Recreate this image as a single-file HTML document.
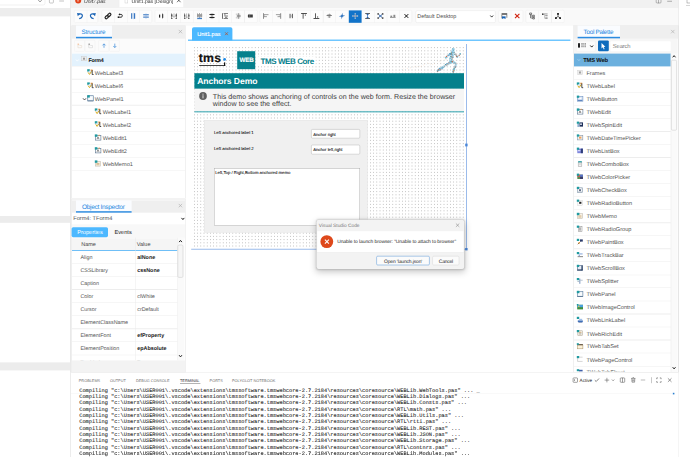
<!DOCTYPE html>
<html><head><meta charset="utf-8"><title>TMS WEB Core - Visual Studio Code</title>
<style>
html,body{margin:0;padding:0;}
body{width:690px;height:457px;overflow:hidden;background:#fff;position:relative;font-family:"Liberation Sans",sans-serif;color:#222;text-rendering:geometricPrecision;}
div{position:absolute;box-sizing:border-box;}
.t{white-space:nowrap;line-height:1;}
text{white-space:pre;}
svg{position:absolute;overflow:visible;}
.mono{font-family:"Liberation Mono",monospace;font-size:5.3px;color:#3a3a3a;white-space:pre;line-height:6.4px;}
</style></head><body>
<div style="left:0;top:0;width:1725px;height:1142.5px;transform:scale(0.4);transform-origin:0 0;"><div id="ide" style="left:0;top:0;width:690px;height:457px;zoom:2.5;">

<div style="left:0px;top:8.1px;width:70px;height:8.1px;background:#ededed;"></div>
<div style="left:0px;top:215.8px;width:70px;height:6.8px;background:#ececec;"></div>
<div style="left:0px;top:362.4px;width:70px;height:7.8px;background:#ececec;"></div>
<div style="left:-5px;top:-6px;width:50px;height:11px;border:0.6px solid #d8d8d8;border-radius:2px;"></div>
<svg style="left:38px;top:0px;" width="4" height="3" viewBox="0 0 4 3"><path d="M0.4 0.2 L2 1.8 L3.6 0.2" fill="none" stroke="#555" stroke-width="0.7"/></svg>
<div style="left:49px;top:-2px;width:4.5px;height:5px;border:0.7px solid #777;border-radius:1px;"></div>
<div style="left:59px;top:-0.3px;width:5px;height:0.7px;background:#b5b5b5;"></div>
<div style="left:59px;top:1px;width:5px;height:0.7px;background:#b5b5b5;"></div>
<div style="left:70px;top:0px;width:0.7px;height:457px;background:#e3e3e3;"></div>
<div style="left:70.7px;top:0px;width:607.5px;height:8.4px;background:#f1f1f1;"></div>
<div style="left:118.7px;top:0px;width:65.4px;height:7.2px;background:#fff;border-left:0.5px solid #e2e2e2;border-right:0.5px solid #e2e2e2;"></div>
<div style="left:70.7px;top:8.4px;width:607.5px;height:1px;background:#fbfbfb;"></div>
<div style="left:75px;top:-2.4px;width:6px;height:6px;border-radius:50%;background:#e2421a;"></div>
<div style="left:77.5px;top:-1px;width:1px;height:2.6px;background:#fff;"></div>
<svg class="t" style="left:83.9px;top:3.10px;" width="1" height="1"><text x="0" y="0" font-size="5.1" fill="#333" style="font-style:italic;">Unit7.pas</text></svg>
<div style="left:124.8px;top:-2px;width:3px;height:5.2px;border:0.5px solid #c4c4c4;"></div>
<svg class="t" style="left:131.7px;top:3.10px;" width="1" height="1"><text x="0" y="0" font-size="5.1" fill="#333" style="">Unit1.pas [Design]</text></svg>
<svg style="left:176.8px;top:-1px;" width="4" height="4" viewBox="0 0 4 4"><path d="M0.3 -1 L3.7 3 M3.7 -1 L0.3 3" stroke="#333" stroke-width="0.7"/></svg>
<div style="left:656px;top:-2px;width:5px;height:5px;border:0.6px solid #555;border-radius:1px;"></div>
<div style="left:658.2px;top:-2px;width:0.6px;height:5px;background:#555;"></div>
<div style="left:667px;top:0.6px;width:5px;height:0.8px;background:#999;"></div>
<div style="left:70.7px;top:9px;width:607.5px;height:16.4px;background:#f9f9f9;"></div>
<div style="left:73.8px;top:10.1px;width:24.3px;height:12.7px;background:#fcfcfc;border:0.5px solid #ececec;border-radius:1.5px;"></div>
<div style="left:101.6px;top:10.1px;width:50.3px;height:12.7px;background:#fcfcfc;border:0.5px solid #ececec;border-radius:1.5px;"></div>
<div style="left:154.8px;top:10.1px;width:102.6px;height:12.7px;background:#fcfcfc;border:0.5px solid #ececec;border-radius:1.5px;"></div>
<div style="left:259.6px;top:10.1px;width:152.3px;height:12.7px;background:#fcfcfc;border:0.5px solid #ececec;border-radius:1.5px;"></div>
<div style="left:498.5px;top:10.1px;width:24.7px;height:12.7px;background:#fcfcfc;border:0.5px solid #ececec;border-radius:1.5px;"></div>
<div style="left:525.6px;top:10.1px;width:38.9px;height:12.7px;background:#fcfcfc;border:0.5px solid #ececec;border-radius:1.5px;"></div>
<div style="left:86.6px;top:10.4px;width:0.5px;height:12.4px;background:#ededed;"></div>
<div style="left:114.3px;top:10.4px;width:0.5px;height:12.4px;background:#ededed;"></div>
<div style="left:127px;top:10.4px;width:0.5px;height:12.4px;background:#ededed;"></div>
<div style="left:139.6px;top:10.4px;width:0.5px;height:12.4px;background:#ededed;"></div>
<div style="left:167.6px;top:10.4px;width:0.5px;height:12.4px;background:#ededed;"></div>
<div style="left:180.3px;top:10.4px;width:0.5px;height:12.4px;background:#ededed;"></div>
<div style="left:193px;top:10.4px;width:0.5px;height:12.4px;background:#ededed;"></div>
<div style="left:205.8px;top:10.4px;width:0.5px;height:12.4px;background:#ededed;"></div>
<div style="left:218.6px;top:10.4px;width:0.5px;height:12.4px;background:#ededed;"></div>
<div style="left:231.4px;top:10.4px;width:0.5px;height:12.4px;background:#ededed;"></div>
<div style="left:244.1px;top:10.4px;width:0.5px;height:12.4px;background:#ededed;"></div>
<div style="left:272.2px;top:10.4px;width:0.5px;height:12.4px;background:#ededed;"></div>
<div style="left:284.8px;top:10.4px;width:0.5px;height:12.4px;background:#ededed;"></div>
<div style="left:297.5px;top:10.4px;width:0.5px;height:12.4px;background:#ededed;"></div>
<div style="left:310.2px;top:10.4px;width:0.5px;height:12.4px;background:#ededed;"></div>
<div style="left:322.9px;top:10.4px;width:0.5px;height:12.4px;background:#ededed;"></div>
<div style="left:335.6px;top:10.4px;width:0.5px;height:12.4px;background:#ededed;"></div>
<div style="left:374px;top:10.4px;width:0.5px;height:12.4px;background:#ededed;"></div>
<div style="left:386.7px;top:10.4px;width:0.5px;height:12.4px;background:#ededed;"></div>
<div style="left:399.6px;top:10.4px;width:0.5px;height:12.4px;background:#ededed;"></div>
<div style="left:510.8px;top:10.4px;width:0.5px;height:12.4px;background:#ededed;"></div>
<div style="left:538.4px;top:10.4px;width:0.5px;height:12.4px;background:#ededed;"></div>
<div style="left:551.3px;top:10.4px;width:0.5px;height:12.4px;background:#ededed;"></div>
<svg style="left:76px;top:12.0px;" width="8" height="8" viewBox="-4 -4 8 8"><path d="M-1.2 -1.7 C1.2 -2.8 2.9 -1.4 2.2 0.4 C1.7 1.6 0.5 2.3 -0.8 2.6" stroke="#1862b5" stroke-width="1.25" fill="none" stroke-linecap="butt"/><path d="M-3 -3 L0.2 -2.4 L-2.2 0.3 Z" fill="#1862b5"/></svg>
<svg style="left:88.7px;top:12.0px;" width="8" height="8" viewBox="-4 -4 8 8"><path d="M1.2 -1.7 C-1.2 -2.8 -2.9 -1.4 -2.2 0.4 C-1.7 1.6 -0.5 2.3 0.8 2.6" stroke="#1862b5" stroke-width="1.25" fill="none" stroke-linecap="butt"/><path d="M3 -3 L-0.2 -2.4 L2.2 0.3 Z" fill="#1862b5"/></svg>
<svg style="left:104px;top:12.0px;" width="8" height="8" viewBox="-4 -4 8 8"><g transform="rotate(-42)"><rect x="-3.5" y="-1.15" width="3.7" height="2.3" rx="1.15" fill="none" stroke="#222" stroke-width="1.15"/><rect x="-0.2" y="-1.15" width="3.7" height="2.3" rx="1.15" fill="none" stroke="#222" stroke-width="1.15"/></g></svg>
<svg style="left:116.5px;top:12.0px;" width="8" height="8" viewBox="-4 -4 8 8"><path d="M-1.2 1.2 L0.8 1.2 C2.2 1.2 2.4 -1.6 0.8 -1.6 L-0.8 -1.6" stroke="#333" stroke-width="1.0" fill="none" stroke-linecap="butt"/><rect x="-2.7" y="0.4" width="1.6" height="1.6" fill="#222"/><path d="M-0.4 -2.8 L-2 -1.6 L-0.4 -0.5 Z" fill="#222"/></svg>
<svg style="left:129.2px;top:12.0px;" width="8" height="8" viewBox="-4 -4 8 8"><rect x="-2" y="-2.8" width="1.05" height="5.6" fill="#2468bb"/><rect x="0.9" y="-2.8" width="1.05" height="5.6" fill="#2468bb"/><rect x="-0.25" y="-3.2" width="0.5" height="6.4" fill="#7fa9dc"/></svg>
<svg style="left:141.8px;top:12.0px;" width="8" height="8" viewBox="-4 -4 8 8"><rect x="-2.8" y="-1.7" width="5.6" height="1.0" fill="#2468bb"/><rect x="-2.8" y="0.6" width="5.6" height="1.0" fill="#2468bb"/><rect x="-0.25" y="-2.6" width="0.5" height="5.4" fill="#7fa9dc"/></svg>
<svg style="left:157.2px;top:12.0px;" width="8" height="8" viewBox="-4 -4 8 8"><rect x="-2.2" y="-1.4" width="1.2" height="3" fill="#222"/><rect x="0.8" y="-1.9" width="1.2" height="3.8" fill="#222"/><rect x="1.2" y="-3" width="0.4" height="6" fill="#777"/></svg>
<svg style="left:169.9px;top:12.0px;" width="8" height="8" viewBox="-4 -4 8 8"><rect x="-2.5" y="-2.6" width="0.5" height="5" fill="#333"/><rect x="-0.25" y="-2.6" width="0.5" height="4.2" fill="#777"/><rect x="2" y="-2.6" width="0.5" height="5" fill="#333"/><rect x="-3" y="-1.6" width="1.5" height="2" fill="#555"/><rect x="1.5" y="-1.6" width="1.5" height="2" fill="#555"/><rect x="-2.4" y="0.6" width="4.8" height="0.5" fill="#999"/><rect x="-2.9" y="2.2" width="1.4" height="0.7" fill="#222"/><rect x="1.5" y="2.2" width="1.4" height="0.7" fill="#222"/></svg>
<svg style="left:182.6px;top:12.0px;" width="8" height="8" viewBox="-4 -4 8 8"><rect x="-2.3" y="-2.6" width="0.5" height="5" fill="#333"/><rect x="-0.25" y="-2.6" width="0.5" height="5" fill="#777"/><rect x="1.8" y="-2.6" width="0.5" height="5" fill="#333"/><rect x="-2.7" y="-1.4" width="1.2" height="2" fill="#555"/><rect x="1.5" y="-1.4" width="1.2" height="2" fill="#555"/><rect x="-2.4" y="0.8" width="4.8" height="0.5" fill="#999"/><rect x="-2.7" y="2.2" width="1.4" height="0.7" fill="#222"/><rect x="1.3" y="2.2" width="1.4" height="0.7" fill="#222"/></svg>
<svg style="left:195.5px;top:12.0px;" width="8" height="8" viewBox="-4 -4 8 8"><rect x="-2.2" y="-2.8" width="0.5" height="4.4" fill="#777"/><rect x="-0.25" y="-3" width="0.5" height="4.8" fill="#555"/><rect x="1.7" y="-2.8" width="0.5" height="4.4" fill="#777"/><rect x="-2.6" y="-1.8" width="5.2" height="2.6" fill="#9a9a9a"/><rect x="-2.4" y="2.2" width="4.8" height="0.9" fill="#1862b5"/><rect x="-1.2" y="1.5" width="2.4" height="0.7" fill="#5b8fd0"/></svg>
<svg style="left:208.1px;top:12.0px;" width="8" height="8" viewBox="-4 -4 8 8"><ellipse cx="0" cy="-1.5" rx="2.9" ry="0.7" fill="#222"/><ellipse cx="0" cy="1.5" rx="2.9" ry="0.7" fill="#222"/><rect x="-0.6" y="-0.5" width="1.2" height="1" fill="#777"/></svg>
<svg style="left:221px;top:12.0px;" width="8" height="8" viewBox="-4 -4 8 8"><rect x="-2.9" y="-2.8" width="0.7" height="5.6" fill="#333"/><rect x="-1.6" y="-2.6" width="4.4" height="0.6" fill="#333"/><rect x="-0.8" y="-0.3" width="3.6" height="0.6" fill="#333"/><rect x="-1.6" y="2" width="4.4" height="0.6" fill="#333"/><rect x="-1.2" y="-1.6" width="1.6" height="1.0" fill="#777"/><rect x="-0.2" y="0.8" width="2.2" height="1.0" fill="#777"/></svg>
<svg style="left:233.8px;top:12.0px;" width="8" height="8" viewBox="-4 -4 8 8"><rect x="0.3" y="-2.8" width="0.5" height="5.6" fill="#555"/><rect x="-2.2" y="-2.2" width="4.4" height="0.6" fill="#999"/><rect x="-1.2" y="-0.8" width="3.8" height="1.6" fill="#8a8a8a"/><rect x="-2.2" y="1.6" width="4.4" height="0.6" fill="#999"/></svg>
<svg style="left:246.4px;top:12.0px;" width="8" height="8" viewBox="-4 -4 8 8"><rect x="-2.4" y="-1.5" width="4.8" height="3" fill="#3a3a3a"/><rect x="-0.8" y="-2.2" width="0.5" height="4.4" fill="#999"/><rect x="-2.9" y="-0.3" width="0.6" height="0.6" fill="#777"/></svg>
<svg style="left:261.8px;top:12.0px;" width="8" height="8" viewBox="-4 -4 8 8"><rect x="-2.7" y="-2.8" width="0.6" height="5.6" fill="#444"/><rect x="-2.1" y="-1.6" width="4.6" height="0.7" fill="#777"/><rect x="-2.1" y="0.4" width="3" height="0.7" fill="#777"/><rect x="-1.7" y="-1.6" width="0.4" height="2.6" fill="#999"/></svg>
<svg style="left:274.4px;top:12.0px;" width="8" height="8" viewBox="-4 -4 8 8"><rect x="2.1" y="-2.8" width="0.6" height="5.6" fill="#444"/><rect x="-2.5" y="-1.6" width="4.6" height="0.7" fill="#777"/><rect x="-0.9" y="0.4" width="3" height="0.7" fill="#777"/><rect x="1.3" y="-1.6" width="0.4" height="2.6" fill="#999"/></svg>
<svg style="left:287.2px;top:12.0px;" width="8" height="8" viewBox="-4 -4 8 8"><rect x="-1.6" y="-2.2" width="0.9" height="4.4" fill="#444"/><rect x="0.7" y="-2.2" width="0.9" height="4.4" fill="#444"/><rect x="-0.3" y="-0.4" width="0.6" height="0.8" fill="#555"/></svg>
<svg style="left:299.8px;top:12.0px;" width="8" height="8" viewBox="-4 -4 8 8"><rect x="-2.9" y="-2.9" width="5.8" height="0.8" fill="#222"/><rect x="-1.3" y="-2.1" width="0.8" height="4.8" fill="#333"/><rect x="0.9" y="-1.8" width="0.8" height="1.8" fill="#777"/></svg>
<svg style="left:312.5px;top:12.0px;" width="8" height="8" viewBox="-4 -4 8 8"><rect x="-2.9" y="2.1" width="5.8" height="0.8" fill="#222"/><rect x="-1.3" y="-2.7" width="0.8" height="4.8" fill="#333"/><rect x="0.9" y="0" width="0.8" height="2" fill="#777"/></svg>
<svg style="left:325.2px;top:12.0px;" width="8" height="8" viewBox="-4 -4 8 8"><rect x="-2.6" y="-0.9" width="5.2" height="0.7" fill="#444"/><rect x="-1.8" y="-2" width="3.6" height="0.6" fill="#999"/><rect x="-1.4" y="0.6" width="2.8" height="0.7" fill="#777"/><rect x="-0.25" y="-2.4" width="0.5" height="4.4" fill="#777"/></svg>
<svg style="left:338.1px;top:12.0px;" width="8" height="8" viewBox="-4 -4 8 8"><path d="M0.6 -3.2 L0.5 -0.7 L3.2 -0.3 L0.7 0.5 L-0.6 3.2 L-0.5 0.7 L-3.2 0.2 L-0.7 -0.5 Z" fill="#1862b5"/></svg>
<div style="left:348.8px;top:10.2px;width:12.7px;height:12.6px;background:#1173c9;"></div>
<svg style="left:351.2px;top:12.0px;" width="8" height="8" viewBox="-4 -4 8 8"><path d="M-2.8 0 L2.8 0 M0 -2.6 L0 2.6" stroke="#9fb2c8" stroke-width="0.9" fill="none" stroke-linecap="butt"/><circle cx="0" cy="0" r="1.3" fill="#8ea3bc"/><path d="M-3.3 0 L-2 -0.9 L-2 0.9 Z M3.3 0 L2 -0.9 L2 0.9 Z M0 -3.1 L-0.9 -1.9 L0.9 -1.9 Z M0 3.1 L-0.9 1.9 L0.9 1.9 Z" fill="#b4c2d2"/></svg>
<svg style="left:363.6px;top:12.0px;" width="8" height="8" viewBox="-4 -4 8 8"><rect x="-2.4" y="-3" width="4.8" height="0.7" fill="#222"/><rect x="-2.4" y="2.3" width="4.8" height="0.7" fill="#222"/><rect x="-0.35" y="-2.2" width="0.7" height="4.4" fill="#2a5fa8"/><path d="M0 -2.6 L-1.4 -1 L1.4 -1 Z M0 2.6 L-1.4 1 L1.4 1 Z" fill="#2a5fa8"/></svg>
<svg style="left:376.4px;top:12.0px;" width="8" height="8" viewBox="-4 -4 8 8"><path d="M-1.6 -1.4 L1.6 1.4 M1.6 -1.4 L-1.6 1.4" stroke="#2a5fa8" stroke-width="1.0" fill="none" stroke-linecap="butt"/><rect x="-3" y="-2.7" width="1.5" height="1.3" fill="#222"/><rect x="1.5" y="-2.7" width="1.5" height="1.3" fill="#222"/><rect x="-3" y="1.4" width="1.5" height="1.3" fill="#222"/><rect x="1.5" y="1.4" width="1.5" height="1.3" fill="#222"/></svg>
<svg style="left:388.9px;top:12.0px;" width="8" height="8" viewBox="-4 -4 8 8"><rect x="-2.8" y="1.2" width="5.6" height="0.7" fill="#777"/><rect x="-2.4" y="-0.4" width="1.8" height="1.4" fill="#8a8a8a"/><rect x="0.6" y="-1.2" width="1.9" height="2.2" fill="#8a8a8a"/></svg>
<svg style="left:402.5px;top:12.0px;" width="8" height="8" viewBox="-4 -4 8 8"><path d="M-2 -2 L2 2 M2 -2 L-2 2" stroke="#333" stroke-width="1.0" fill="none" stroke-linecap="butt"/><rect x="-0.8" y="-0.8" width="1.6" height="1.6" fill="#444"/></svg>
<div style="left:415.4px;top:10.3px;width:80px;height:12.6px;background:#fff;border:0.5px solid #e2e2e2;border-radius:1.5px;"></div>
<svg class="t" style="left:417.2px;top:18.30px;" width="1" height="1"><text x="0" y="0" font-size="5.5" fill="#505050" style="">Default Desktop</text></svg>
<svg style="left:490px;top:15px;" width="3.4" height="2.6" viewBox="0 0 3.4 2.6"><path d="M0.3 0.3 L1.7 1.9 L3.1 0.3" fill="none" stroke="#222" stroke-width="0.9"/></svg>
<svg style="left:500.3px;top:12.0px;" width="8" height="8" viewBox="-4 -4 8 8"><rect x="-2.8" y="-2.6" width="5.6" height="1.2" fill="#222"/><rect x="-2.8" y="-1.2" width="0.6" height="3.6" fill="#444"/><rect x="2.2" y="-1.2" width="0.6" height="3" fill="#444"/><rect x="-2.4" y="0.4" width="3.6" height="2.4" fill="#1862b5"/><rect x="-1.6" y="2" width="1.8" height="0.8" fill="#cde"/></svg>
<svg style="left:513px;top:12.0px;" width="8" height="8" viewBox="-4 -4 8 8"><path d="M-2.2 -2.2 L2.2 2.2 M2.2 -2.2 L-2.2 2.2" stroke="#d0210e" stroke-width="1.1" fill="none" stroke-linecap="butt"/></svg>
<svg style="left:528px;top:12.0px;" width="8" height="8" viewBox="-4 -4 8 8"><path d="M-1.4 -1.4 L-1.4 2 L1 2 M-1.4 0 L1 0" stroke="#333" stroke-width="0.6" fill="none" stroke-linecap="butt"/><path d="M-2.4 -3 L-0.4 -3 L-0.4 -1.4 L-2.4 -1.4 Z M0.8 -0.8 L2.4 -0.8 L2.4 0.8 L0.8 0.8 Z M0.8 1.4 L2.4 1.4 L2.4 3 L0.8 3 Z" stroke="#333" stroke-width="0.6" fill="none" stroke-linecap="butt"/></svg>
<svg style="left:540.8px;top:12.0px;" width="8" height="8" viewBox="-4 -4 8 8"><rect x="-2.8" y="-2.6" width="1.6" height="1.6" fill="#444"/><rect x="-0.6" y="-2.4" width="3.4" height="0.7" fill="#777"/><rect x="0.4" y="-0.8" width="2.4" height="0.7" fill="#777"/><rect x="0.4" y="0.8" width="2.4" height="0.7" fill="#777"/><rect x="0.4" y="2.2" width="2.4" height="0.7" fill="#777"/><rect x="-0.6" y="-2.4" width="0.5" height="5" fill="#999"/></svg>
<svg style="left:553.8px;top:12.0px;" width="8" height="8" viewBox="-4 -4 8 8"><path d="M0 -2 L0 0.4 L-2.2 2 M0 0.4 L2.2 2" stroke="#333" stroke-width="0.7" fill="none" stroke-linecap="butt"/><rect x="-0.9" y="-3" width="1.8" height="1.8" fill="#222"/><rect x="-3" y="1.2" width="1.8" height="1.8" fill="#222"/><rect x="1.2" y="1.2" width="1.8" height="1.8" fill="#222"/></svg>
<div style="left:70.7px;top:25.4px;width:607.5px;height:348px;background:#f1f1f1;"></div>
<div style="left:71.5px;top:25.4px;width:114px;height:173.3px;background:#fff;border:0.5px solid #e4e4e4;"></div>
<div style="left:71.5px;top:25.3px;width:114px;height:13.4px;background:#efefef;"></div>
<div style="left:75.9px;top:25.4px;width:35.9px;height:12.2px;background:#fafcff;"></div>
<div style="left:75.9px;top:36.8px;width:35.9px;height:1.4px;background:#2b8be0;"></div>
<svg class="t" style="left:81.7px;top:33.70px;" width="1" height="1"><text x="0" y="0" font-size="6.3" fill="#2386e0" style="letter-spacing:-0.22px;">Structure</text></svg>
<svg style="left:178.2px;top:29.6px;" width="4" height="4" viewBox="0 0 4 4"><path d="M0.3 0.3 L3.7 3.7 M3.7 0.3 L0.3 3.7" stroke="#aaa" stroke-width="0.6"/></svg>
<div style="left:72px;top:38.7px;width:113px;height:14.5px;background:#fbfbfb;"></div>
<div style="left:74.2px;top:40px;width:10.5px;height:11.5px;background:#fbfbfb;border:0.5px solid #eee;border-radius:1px;"></div>
<div style="left:84.6px;top:40px;width:10.5px;height:11.5px;background:#fbfbfb;border:0.5px solid #eee;border-radius:1px;"></div>
<div style="left:98.5px;top:40px;width:10.5px;height:11.5px;background:#fbfbfb;border:0.5px solid #eee;border-radius:1px;"></div>
<div style="left:109.2px;top:40px;width:10.5px;height:11.5px;background:#fbfbfb;border:0.5px solid #eee;border-radius:1px;"></div>
<svg style="left:77.39999999999999px;top:44px;" width="4.4" height="4" viewBox="0 0 4.4 4"><path d="M0.3 0.9 L1.8 0.9 L2.2 1.5 L4.1 1.5 L4.1 3.7 L0.3 3.7 Z" fill="none" stroke="#e4d6c6" stroke-width="0.5"/></svg>
<svg style="left:88.2px;top:44px;" width="4.4" height="4" viewBox="0 0 4.4 4"><path d="M0.3 0.9 L1.8 0.9 L2.2 1.5 L4.1 1.5 L4.1 3.7 L0.3 3.7 Z" fill="none" stroke="#cfcfcf" stroke-width="0.5"/></svg>
<div style="left:77.6px;top:43.4px;width:1.2px;height:1.2px;background:#f4b78a;"></div>
<div style="left:88.4px;top:43.4px;width:1.4px;height:1.2px;background:#999;"></div>
<svg style="left:101.9px;top:43.2px;" width="4" height="5" viewBox="0 0 4 5"><path d="M2 4.6 L2 0.8 M0.5 2.2 L2 0.6 L3.5 2.2" fill="none" stroke="#3b8ad8" stroke-width="0.7"/></svg>
<svg style="left:112.8px;top:43.2px;" width="4" height="5" viewBox="0 0 4 5"><path d="M2 0.4 L2 4.2 M0.5 2.8 L2 4.4 L3.5 2.8" fill="none" stroke="#3b8ad8" stroke-width="0.7"/></svg>
<div style="left:72px;top:53.4px;width:113px;height:12.62px;background:#e3f2fd;"></div>
<div style="left:72px;top:65.92px;width:113px;height:0.5px;background:#ebebeb;"></div>
<svg style="left:81.4px;top:56.5px;" width="5" height="5" viewBox="0 0 5 5"><rect x="0.2" y="0.2" width="4.4" height="4.2" fill="#ececec" stroke="#c4c4c4" stroke-width="0.4"/><path d="M1.5 1.5 L3.3 3.1 M3.3 1.5 L1.5 3.1" stroke="#666" stroke-width="0.7"/></svg>
<svg class="t" style="left:88.5px;top:61.40px;" width="1" height="1"><text x="0" y="0" font-size="5.3" fill="#111" style="font-weight:bold;letter-spacing:-0.2px;">Form4</text></svg>
<svg style="left:75.6px;top:59.0px;" width="3.4" height="2.4" viewBox="0 0 3.4 2.4"><path d="M0.3 0.3 L1.7 1.9 L3.1 0.3" fill="none" stroke="#fff" stroke-width="0.8"/></svg>
<div style="left:72px;top:78.94px;width:113px;height:0.5px;background:#ebebeb;"></div>
<svg style="left:87.3px;top:69.32000000000001px;" width="6.4" height="6" viewBox="0 0 6.4 6"><rect x="0" y="0" width="2.6" height="2.4" fill="#1f9aa0"/><rect x="3.4" y="0.3" width="2" height="1.6" fill="#e58a2a" opacity="0.8"/><rect x="1.6" y="1.6" width="2.4" height="2.2" fill="#d8e4ee"/><path d="M0.9 3.2 L2.3 5.2 L4.4 2.2" fill="none" stroke="#d9ab1c" stroke-width="1"/><path d="M5 1 L5 5.3 L6.4 5.3" fill="none" stroke="#222" stroke-width="0.8"/></svg>
<svg class="t" style="left:94.9px;top:74.62px;" width="1" height="1"><text x="0" y="0" font-size="5.6" fill="#555" style="">WebLabel3</text></svg>
<div style="left:72px;top:91.96px;width:113px;height:0.5px;background:#ebebeb;"></div>
<svg style="left:87.3px;top:82.32000000000001px;" width="6.4" height="6" viewBox="0 0 6.4 6"><rect x="0" y="0" width="2.6" height="2.4" fill="#1f9aa0"/><rect x="3.4" y="0.3" width="2" height="1.6" fill="#e58a2a" opacity="0.8"/><rect x="1.6" y="1.6" width="2.4" height="2.2" fill="#d8e4ee"/><path d="M0.9 3.2 L2.3 5.2 L4.4 2.2" fill="none" stroke="#d9ab1c" stroke-width="1"/><path d="M5 1 L5 5.3 L6.4 5.3" fill="none" stroke="#222" stroke-width="0.8"/></svg>
<svg class="t" style="left:94.9px;top:87.62px;" width="1" height="1"><text x="0" y="0" font-size="5.6" fill="#555" style="">WebLabel6</text></svg>
<div style="left:72px;top:104.98px;width:113px;height:0.5px;background:#ebebeb;"></div>
<svg style="left:87.3px;top:95.32000000000001px;" width="6.4" height="6" viewBox="0 0 6.4 6"><rect x="0.5" y="0.5" width="5.6" height="5.2" fill="#e4edf5" stroke="#5f7f9f" stroke-width="0.6"/><rect x="1.4" y="1.6" width="3.8" height="3" fill="#fff" opacity="0.8"/><rect x="0" y="0" width="2.6" height="2.4" fill="#1f9aa0"/><path d="M0.5 5.7 L6.1 5.7" stroke="#3f5f7f" stroke-width="0.6"/></svg>
<svg class="t" style="left:94.9px;top:100.62px;" width="1" height="1"><text x="0" y="0" font-size="5.6" fill="#555" style="">WebPanel1</text></svg>
<svg style="left:82.6px;top:97.86000000000001px;" width="3.4" height="2.4" viewBox="0 0 3.4 2.4"><path d="M0.2 0.3 L1.7 2 L3.2 0.3" fill="none" stroke="#444" stroke-width="0.9"/></svg>
<div style="left:72px;top:117.99999999999999px;width:113px;height:0.5px;background:#ebebeb;"></div>
<svg style="left:94.6px;top:108.32000000000001px;" width="6.4" height="6" viewBox="0 0 6.4 6"><rect x="0" y="0" width="2.6" height="2.4" fill="#1f9aa0"/><rect x="3.4" y="0.3" width="2" height="1.6" fill="#e58a2a" opacity="0.8"/><rect x="1.6" y="1.6" width="2.4" height="2.2" fill="#d8e4ee"/><path d="M0.9 3.2 L2.3 5.2 L4.4 2.2" fill="none" stroke="#d9ab1c" stroke-width="1"/><path d="M5 1 L5 5.3 L6.4 5.3" fill="none" stroke="#222" stroke-width="0.8"/></svg>
<svg class="t" style="left:102.8px;top:113.62px;" width="1" height="1"><text x="0" y="0" font-size="5.6" fill="#555" style="">WebLabel1</text></svg>
<div style="left:72px;top:131.02px;width:113px;height:0.5px;background:#ebebeb;"></div>
<svg style="left:94.6px;top:121.32000000000001px;" width="6.4" height="6" viewBox="0 0 6.4 6"><rect x="0" y="0" width="2.6" height="2.4" fill="#1f9aa0"/><rect x="3.4" y="0.3" width="2" height="1.6" fill="#e58a2a" opacity="0.8"/><rect x="1.6" y="1.6" width="2.4" height="2.2" fill="#d8e4ee"/><path d="M0.9 3.2 L2.3 5.2 L4.4 2.2" fill="none" stroke="#d9ab1c" stroke-width="1"/><path d="M5 1 L5 5.3 L6.4 5.3" fill="none" stroke="#222" stroke-width="0.8"/></svg>
<svg class="t" style="left:102.8px;top:126.62px;" width="1" height="1"><text x="0" y="0" font-size="5.6" fill="#555" style="">WebLabel2</text></svg>
<div style="left:72px;top:144.04000000000002px;width:113px;height:0.5px;background:#ebebeb;"></div>
<svg style="left:94.6px;top:134.32px;" width="6.4" height="6" viewBox="0 0 6.4 6"><rect x="0.5" y="1.1" width="5.6" height="4.6" fill="#fff" stroke="#566f8a" stroke-width="0.6"/><rect x="0" y="0" width="2.6" height="2.4" fill="#1f9aa0"/><path d="M2.2 4.6 L3.2 2.4 L4.2 4.6 M2.6 3.8 L3.8 3.8" fill="none" stroke="#444" stroke-width="0.5"/><rect x="3.6" y="0.4" width="1.6" height="1" fill="#e58a2a" opacity="0.7"/></svg>
<svg class="t" style="left:102.8px;top:139.62px;" width="1" height="1"><text x="0" y="0" font-size="5.6" fill="#555" style="">WebEdit1</text></svg>
<div style="left:72px;top:157.06px;width:113px;height:0.5px;background:#ebebeb;"></div>
<svg style="left:94.6px;top:147.32px;" width="6.4" height="6" viewBox="0 0 6.4 6"><rect x="0.5" y="1.1" width="5.6" height="4.6" fill="#fff" stroke="#566f8a" stroke-width="0.6"/><rect x="0" y="0" width="2.6" height="2.4" fill="#1f9aa0"/><path d="M2.2 4.6 L3.2 2.4 L4.2 4.6 M2.6 3.8 L3.8 3.8" fill="none" stroke="#444" stroke-width="0.5"/><rect x="3.6" y="0.4" width="1.6" height="1" fill="#e58a2a" opacity="0.7"/></svg>
<svg class="t" style="left:102.8px;top:152.62px;" width="1" height="1"><text x="0" y="0" font-size="5.6" fill="#555" style="">WebEdit2</text></svg>
<div style="left:72px;top:170.08px;width:113px;height:0.5px;background:#ebebeb;"></div>
<svg style="left:94.6px;top:160.32px;" width="6.4" height="6" viewBox="0 0 6.4 6"><rect x="0.6" y="0.9" width="5" height="4.8" fill="#f6f1e6" stroke="#b9b2a4" stroke-width="0.5"/><rect x="0" y="0" width="2.6" height="2.4" fill="#1f9aa0"/><path d="M1.6 3.1 L4.6 3.1 M1.6 4.3 L4.6 4.3" stroke="#c79a5b" stroke-width="0.6"/></svg>
<svg class="t" style="left:102.8px;top:165.62px;" width="1" height="1"><text x="0" y="0" font-size="5.6" fill="#555" style="">WebMemo1</text></svg>
<div style="left:71.5px;top:199.3px;width:114px;height:173px;background:#fff;border:0.5px solid #e4e4e4;"></div>
<div style="left:71.5px;top:200.2px;width:114px;height:12.6px;background:#efefef;"></div>
<div style="left:75.9px;top:200.2px;width:55.8px;height:11.2px;background:#fafcff;"></div>
<div style="left:75.9px;top:211.1px;width:55.8px;height:1.5px;background:#2b8be0;"></div>
<svg class="t" style="left:81.8px;top:208.80px;" width="1" height="1"><text x="0" y="0" font-size="6.5" fill="#2386e0" style="letter-spacing:-0.3px;">Object Inspector</text></svg>
<svg style="left:178.2px;top:203.6px;" width="4" height="4" viewBox="0 0 4 4"><path d="M0.3 0.3 L3.7 3.7 M3.7 0.3 L0.3 3.7" stroke="#aaa" stroke-width="0.6"/></svg>
<div style="left:72px;top:212.8px;width:113px;height:12.4px;background:#fff;border-bottom:0.5px solid #e6e6e6;"></div>
<svg class="t" style="left:73.1px;top:220.30px;" width="1" height="1"><text x="0" y="0" font-size="5.65" fill="#555" style="">Form4: TForm4</text></svg>
<svg style="left:181px;top:217.6px;" width="3.4" height="2.6" viewBox="0 0 3.4 2.6"><path d="M0.3 0.3 L1.7 2 L3.1 0.3" fill="none" stroke="#222" stroke-width="1"/></svg>
<div style="left:72px;top:225.2px;width:113px;height:13.2px;background:#f8f8f8;"></div>
<div style="left:71.4px;top:227px;width:36.5px;height:10.3px;background:#4cb8ff;border-radius:1.6px;"></div>
<svg class="t" style="left:77px;top:234.30px;" width="1" height="1"><text x="0" y="0" font-size="5.7" fill="#fff" style="letter-spacing:-0.03px;">Properties</text></svg>
<svg class="t" style="left:114.4px;top:234.30px;" width="1" height="1"><text x="0" y="0" font-size="5.7" fill="#222" style="">Events</text></svg>
<div style="left:72px;top:238.4px;width:105.6px;height:11.6px;background:#f5f5f5;"></div>
<div style="left:72px;top:249.8px;width:105.6px;height:1px;background:#4cb0f5;"></div>
<svg class="t" style="left:81px;top:245.90px;" width="1" height="1"><text x="0" y="0" font-size="5.5" fill="#444" style="">Name</text></svg>
<svg class="t" style="left:136.8px;top:245.90px;" width="1" height="1"><text x="0" y="0" font-size="5.5" fill="#444" style="">Value</text></svg>
<div style="left:135.2px;top:237.7px;width:0.5px;height:122.8px;background:#e6e6e6;"></div>
<div style="left:72px;top:263.25px;width:105.6px;height:0.5px;background:#e9e9e9;"></div>
<svg class="t" style="left:80.3px;top:258.90px;" width="1" height="1"><text x="0" y="0" font-size="5.4" fill="#555" style="">Align</text></svg>
<svg class="t" style="left:137px;top:258.90px;" width="1" height="1"><text x="0" y="0" font-size="5.4" fill="#222" style="font-weight:bold;">alNone</text></svg>
<div style="left:72px;top:276.3px;width:105.6px;height:0.5px;background:#e9e9e9;"></div>
<svg class="t" style="left:80.3px;top:271.95px;" width="1" height="1"><text x="0" y="0" font-size="5.4" fill="#555" style="">CSSLibrary</text></svg>
<svg class="t" style="left:137px;top:271.95px;" width="1" height="1"><text x="0" y="0" font-size="5.4" fill="#222" style="font-weight:bold;">cssNone</text></svg>
<div style="left:72px;top:289.35px;width:105.6px;height:0.5px;background:#e9e9e9;"></div>
<svg class="t" style="left:80.3px;top:285.00px;" width="1" height="1"><text x="0" y="0" font-size="5.4" fill="#555" style="">Caption</text></svg>
<div style="left:72px;top:302.40000000000003px;width:105.6px;height:0.5px;background:#e9e9e9;"></div>
<svg class="t" style="left:80.3px;top:298.05px;" width="1" height="1"><text x="0" y="0" font-size="5.4" fill="#555" style="">Color</text></svg>
<svg class="t" style="left:137px;top:298.05px;" width="1" height="1"><text x="0" y="0" font-size="5.4" fill="#555" style="">clWhite</text></svg>
<div style="left:72px;top:315.45000000000005px;width:105.6px;height:0.5px;background:#e9e9e9;"></div>
<svg class="t" style="left:80.3px;top:311.10px;" width="1" height="1"><text x="0" y="0" font-size="5.4" fill="#555" style="">Cursor</text></svg>
<svg class="t" style="left:137px;top:311.10px;" width="1" height="1"><text x="0" y="0" font-size="5.4" fill="#555" style="">crDefault</text></svg>
<div style="left:72px;top:328.50000000000006px;width:105.6px;height:0.5px;background:#e9e9e9;"></div>
<svg class="t" style="left:80.3px;top:324.15px;" width="1" height="1"><text x="0" y="0" font-size="5.4" fill="#555" style="">ElementClassName</text></svg>
<div style="left:72px;top:341.55px;width:105.6px;height:0.5px;background:#e9e9e9;"></div>
<svg class="t" style="left:80.3px;top:337.20px;" width="1" height="1"><text x="0" y="0" font-size="5.4" fill="#555" style="">ElementFont</text></svg>
<svg class="t" style="left:137px;top:337.20px;" width="1" height="1"><text x="0" y="0" font-size="5.4" fill="#222" style="font-weight:bold;">efProperty</text></svg>
<div style="left:72px;top:354.6px;width:105.6px;height:0.5px;background:#e9e9e9;"></div>
<svg class="t" style="left:80.3px;top:350.25px;" width="1" height="1"><text x="0" y="0" font-size="5.4" fill="#555" style="">ElementPosition</text></svg>
<svg class="t" style="left:137px;top:350.25px;" width="1" height="1"><text x="0" y="0" font-size="5.4" fill="#222" style="font-weight:bold;">epAbsolute</text></svg>
<div style="left:72px;top:355.0px;width:105.6px;height:5.5px;overflow:hidden;"><div class="t" style="left:8.3px;top:3.6px;line-height:6.4px;font-size:5.4px;color:#777;">Enabled</div><div class="t" style="left:65px;top:3.6px;line-height:6.4px;font-size:5.4px;color:#777;">True</div></div>
<div style="left:177.4px;top:237.7px;width:7px;height:122.8px;background:#fafafa;border-left:0.5px solid #e8e8e8;"></div>
<div style="left:177.7px;top:244.7px;width:5.6px;height:32.7px;background:#f6f6f6;border:0.6px solid #bdbdbd;border-radius:1.4px;"></div>
<svg style="left:178.7px;top:240px;" width="3.4" height="2.6" viewBox="0 0 3.4 2.6"><path d="M0.3 2.1 L1.7 0.4 L3.1 2.1" fill="none" stroke="#222" stroke-width="1"/></svg>
<svg style="left:178.7px;top:354.6px;" width="3.4" height="2.6" viewBox="0 0 3.4 2.6"><path d="M0.3 0.4 L1.7 2.1 L3.1 0.4" fill="none" stroke="#222" stroke-width="1"/></svg>
<div style="left:72px;top:360.5px;width:113px;height:11.7px;background:#f3f3f3;"></div>
<div style="left:185.8px;top:25.4px;width:387.3px;height:348px;background:#fff;"></div>
<div style="left:192.1px;top:27px;width:40.3px;height:13.4px;background:#4cb8ff;border-radius:1.8px 1.8px 0 0;"></div>
<svg class="t" style="left:197.3px;top:35.56px;" width="1" height="1"><text x="0" y="0" font-size="5.5" fill="#fff" style="stroke:#fff;stroke-width:0.12px;">Unit1.pas</text></svg>
<svg style="left:224.6px;top:32px;" width="3.4" height="3.4" viewBox="0 0 3.4 3.4"><path d="M0.3 0.3 L3.1 3.1 M3.1 0.3 L0.3 3.1" stroke="#b0583a" stroke-width="0.8"/></svg>
<div style="left:188px;top:39.7px;width:382.5px;height:0.9px;background:#4cb8ff;"></div>
<div style="left:192.9px;top:45.8px;width:273px;height:202.6px;background:#fff;"></div>
<svg style="left:192.9px;top:45.8px;" width="273" height="202.6" viewBox="0 0 273 202.6"><path d="M1.3 1.6H272M1.3 4.8H272M1.3 8.0H272M1.3 11.2H272M1.3 14.4H272M1.3 17.6H272M1.3 20.8H272M1.3 24.0H272M1.3 27.2H272M1.3 30.4H272M1.3 33.6H272M1.3 36.8H272M1.3 40.0H272M1.3 43.2H272M1.3 46.4H272M1.3 49.6H272M1.3 52.8H272M1.3 56.0H272M1.3 59.2H272M1.3 62.4H272M1.3 65.6H272M1.3 68.8H272M1.3 72.0H272M1.3 75.2H272M1.3 78.4H272M1.3 81.6H272M1.3 84.8H272M1.3 88.0H272M1.3 91.2H272M1.3 94.4H272M1.3 97.6H272M1.3 100.8H272M1.3 104.0H272M1.3 107.2H272M1.3 110.4H272M1.3 113.6H272M1.3 116.8H272M1.3 120.0H272M1.3 123.2H272M1.3 126.4H272M1.3 129.6H272M1.3 132.8H272M1.3 136.0H272M1.3 139.2H272M1.3 142.4H272M1.3 145.6H272M1.3 148.8H272M1.3 152.0H272M1.3 155.2H272M1.3 158.4H272M1.3 161.6H272M1.3 164.8H272M1.3 168.0H272M1.3 171.2H272M1.3 174.4H272M1.3 177.6H272M1.3 180.8H272M1.3 184.0H272M1.3 187.2H272M1.3 190.4H272M1.3 193.6H272M1.3 196.8H272M1.3 200.0H272" fill="none" stroke="#666" stroke-width="0.62" stroke-dasharray="0.62 2.58"/></svg>
<div style="left:256px;top:56.6px;width:59.4px;height:9.2px;background:#fff;"></div>
<div style="left:465.9px;top:44px;width:1px;height:205.4px;background:#82abe6;"></div>
<div style="left:191px;top:248.6px;width:275.6px;height:0.9px;background:#82abe6;"></div>
<div style="left:465px;top:143.6px;width:2.6px;height:2.6px;background:#4a86d8;"></div>
<div style="left:465px;top:247.8px;width:2.6px;height:2.6px;background:#4a86d8;"></div>
<svg class="t" style="left:198.6px;top:61.40px;" width="1" height="1"><text x="0" y="0" font-size="12.2" fill="#111" style="font-weight:bold;letter-spacing:0.25px;stroke:#111;stroke-width:0.2px;">tms</text></svg>
<div style="left:199px;top:65px;width:26px;height:0.9px;background:#111;"></div>
<div style="left:224.1px;top:62.2px;width:0.9px;height:3.6px;background:#111;"></div>
<div style="left:223px;top:57.8px;width:3px;height:3px;border-radius:50%;background:#1e88e5;"></div>
<div style="left:237px;top:51px;width:18.2px;height:18.2px;background:#06808c;"></div>
<svg class="t" style="left:239.4px;top:62.40px;" width="1" height="1"><text x="0" y="0" font-size="6.3" fill="#fff" style="font-weight:bold;letter-spacing:-0.25px;stroke:#fff;stroke-width:0.12px;">WEB</text></svg>
<svg class="t" style="left:260.3px;top:63.70px;" width="1" height="1"><text x="0" y="0" font-size="8.0" fill="#06808c" style="font-weight:bold;letter-spacing:-0.4px;">TMS WEB Core</text></svg>
<svg style="left:400px;top:42px;" width="70" height="36" viewBox="0 0 70 36"><path d="M53.5 7.3 L53.3 7.5" fill="none" stroke="#9ccde2" stroke-width="2.8" stroke-linecap="round" stroke-linejoin="round" opacity="0.85"/><path d="M53.0 9.2 L52.2 13.0 L51.2 16.5 L50.6 20.0" fill="none" stroke="#9ccde2" stroke-width="3.6" stroke-linecap="round" stroke-linejoin="round" opacity="0.85"/><path d="M52.4 10.6 L49.0 12.6 L46.0 15.6" fill="none" stroke="#9ccde2" stroke-width="1.7" stroke-linecap="round" stroke-linejoin="round" opacity="0.85"/><path d="M54.0 10.8 L56.0 13.2 L57.4 15.0" fill="none" stroke="#9ccde2" stroke-width="1.6" stroke-linecap="round" stroke-linejoin="round" opacity="0.85"/><path d="M57.4 15.0 L59.0 13.4 L60.2 11.8" fill="none" stroke="#9ccde2" stroke-width="1.3" stroke-linecap="round" stroke-linejoin="round" opacity="0.85"/><path d="M50.6 20.0 L48.4 21.8 L46.0 23.2 L42.6 25.4 L39.4 27.4 L37.6 28.6" fill="none" stroke="#9ccde2" stroke-width="2.2" stroke-linecap="round" stroke-linejoin="round" opacity="0.85"/><path d="M51.4 19.6 L54.4 20.6 L56.2 21.8 L55.2 24.6 L53.8 27.4 L53.2 29.6" fill="none" stroke="#9ccde2" stroke-width="2.1" stroke-linecap="round" stroke-linejoin="round" opacity="0.85"/><circle cx="54.2" cy="8.2" r="0.43" fill="#ffffff" opacity="0.9"/><circle cx="53.5" cy="7.7" r="0.32" fill="#7fc0e4" opacity="0.9"/><circle cx="53.6" cy="8.3" r="0.45" fill="#2b9bb2" opacity="0.9"/><circle cx="53.7" cy="7.8" r="0.46" fill="#7fc0e4" opacity="0.9"/><circle cx="52.7" cy="6.7" r="0.49" fill="#2b9bb2" opacity="0.9"/><circle cx="52.9" cy="14.6" r="0.42" fill="#ef8a52" opacity="0.9"/><circle cx="51.7" cy="16.5" r="0.48" fill="#2b9bb2" opacity="0.9"/><circle cx="51.5" cy="14.1" r="0.40" fill="#2b9bb2" opacity="0.9"/><circle cx="53.3" cy="15.5" r="0.35" fill="#2b9bb2" opacity="0.9"/><circle cx="54.2" cy="10.7" r="0.44" fill="#2b9bb2" opacity="0.9"/><circle cx="51.6" cy="10.8" r="0.30" fill="#ffffff" opacity="0.9"/><circle cx="50.2" cy="14.8" r="0.30" fill="#2b9bb2" opacity="0.9"/><circle cx="50.4" cy="16.0" r="0.43" fill="#ffffff" opacity="0.9"/><circle cx="50.5" cy="18.8" r="0.41" fill="#3a7fb8" opacity="0.9"/><circle cx="54.2" cy="10.7" r="0.55" fill="#ef8a52" opacity="0.9"/><circle cx="52.5" cy="11.1" r="0.31" fill="#2b9bb2" opacity="0.9"/><circle cx="52.0" cy="10.9" r="0.51" fill="#ffffff" opacity="0.9"/><circle cx="50.8" cy="13.5" r="0.30" fill="#e2582e" opacity="0.9"/><circle cx="51.7" cy="15.8" r="0.51" fill="#ffffff" opacity="0.9"/><circle cx="51.3" cy="11.4" r="0.50" fill="#e2582e" opacity="0.9"/><circle cx="51.3" cy="12.4" r="0.47" fill="#e2582e" opacity="0.9"/><circle cx="51.7" cy="15.8" r="0.33" fill="#2b9bb2" opacity="0.9"/><circle cx="49.8" cy="20.5" r="0.41" fill="#ef8a52" opacity="0.9"/><circle cx="51.0" cy="19.6" r="0.33" fill="#2b9bb2" opacity="0.9"/><circle cx="52.8" cy="15.3" r="0.35" fill="#ef8a52" opacity="0.9"/><circle cx="51.0" cy="11.8" r="0.32" fill="#e2582e" opacity="0.9"/><circle cx="52.9" cy="11.8" r="0.39" fill="#2b9bb2" opacity="0.9"/><circle cx="51.7" cy="17.1" r="0.45" fill="#7fc0e4" opacity="0.9"/><circle cx="52.2" cy="10.4" r="0.31" fill="#2b9bb2" opacity="0.9"/><circle cx="49.8" cy="16.1" r="0.55" fill="#7fc0e4" opacity="0.9"/><circle cx="52.2" cy="9.4" r="0.50" fill="#7fc0e4" opacity="0.9"/><circle cx="52.4" cy="15.5" r="0.54" fill="#3a7fb8" opacity="0.9"/><circle cx="52.5" cy="12.9" r="0.39" fill="#3a7fb8" opacity="0.9"/><circle cx="51.2" cy="12.0" r="0.52" fill="#ef8a52" opacity="0.9"/><circle cx="52.4" cy="18.3" r="0.41" fill="#ffffff" opacity="0.9"/><circle cx="52.0" cy="15.3" r="0.42" fill="#2b9bb2" opacity="0.9"/><circle cx="51.0" cy="13.7" r="0.36" fill="#ffffff" opacity="0.9"/><circle cx="51.5" cy="11.0" r="0.49" fill="#7fc0e4" opacity="0.9"/><circle cx="51.4" cy="16.6" r="0.40" fill="#ffffff" opacity="0.9"/><circle cx="51.8" cy="14.7" r="0.52" fill="#e2582e" opacity="0.9"/><circle cx="53.3" cy="12.8" r="0.42" fill="#7fc0e4" opacity="0.9"/><circle cx="53.9" cy="11.2" r="0.33" fill="#7fc0e4" opacity="0.9"/><circle cx="51.0" cy="13.7" r="0.47" fill="#ffffff" opacity="0.9"/><circle cx="52.3" cy="19.3" r="0.51" fill="#2b9bb2" opacity="0.9"/><circle cx="49.8" cy="16.7" r="0.38" fill="#ffffff" opacity="0.9"/><circle cx="50.0" cy="16.4" r="0.49" fill="#2b9bb2" opacity="0.9"/><circle cx="50.8" cy="12.4" r="0.41" fill="#2b9bb2" opacity="0.9"/><circle cx="51.3" cy="17.9" r="0.47" fill="#2b9bb2" opacity="0.9"/><circle cx="51.6" cy="13.0" r="0.43" fill="#ffffff" opacity="0.9"/><circle cx="52.1" cy="9.4" r="0.40" fill="#7fc0e4" opacity="0.9"/><circle cx="49.3" cy="21.1" r="0.33" fill="#3a7fb8" opacity="0.9"/><circle cx="53.3" cy="12.1" r="0.42" fill="#ffffff" opacity="0.9"/><circle cx="49.3" cy="21.1" r="0.35" fill="#2b9bb2" opacity="0.9"/><circle cx="52.8" cy="16.6" r="0.37" fill="#ffffff" opacity="0.9"/><circle cx="50.2" cy="18.1" r="0.39" fill="#ffffff" opacity="0.9"/><circle cx="51.4" cy="14.2" r="0.41" fill="#2b9bb2" opacity="0.9"/><circle cx="52.3" cy="10.8" r="0.42" fill="#7fc0e4" opacity="0.9"/><circle cx="50.7" cy="20.2" r="0.54" fill="#ffffff" opacity="0.9"/><circle cx="52.2" cy="15.9" r="0.43" fill="#ffffff" opacity="0.9"/><circle cx="51.6" cy="14.8" r="0.38" fill="#ef8a52" opacity="0.9"/><circle cx="52.4" cy="16.7" r="0.51" fill="#ef8a52" opacity="0.9"/><circle cx="51.1" cy="17.4" r="0.43" fill="#2b9bb2" opacity="0.9"/><circle cx="51.1" cy="16.3" r="0.44" fill="#3a7fb8" opacity="0.9"/><circle cx="49.8" cy="15.8" r="0.40" fill="#ffffff" opacity="0.9"/><circle cx="51.8" cy="12.7" r="0.53" fill="#3a7fb8" opacity="0.9"/><circle cx="50.4" cy="14.6" r="0.53" fill="#2b9bb2" opacity="0.9"/><circle cx="54.0" cy="10.4" r="0.36" fill="#7fc0e4" opacity="0.9"/><circle cx="51.8" cy="16.7" r="0.33" fill="#ffffff" opacity="0.9"/><circle cx="52.0" cy="18.9" r="0.48" fill="#e2582e" opacity="0.9"/><circle cx="52.6" cy="14.1" r="0.43" fill="#7fc0e4" opacity="0.9"/><circle cx="50.0" cy="17.4" r="0.36" fill="#7fc0e4" opacity="0.9"/><circle cx="50.3" cy="17.7" r="0.52" fill="#ffffff" opacity="0.9"/><circle cx="52.4" cy="11.6" r="0.52" fill="#7fc0e4" opacity="0.9"/><circle cx="49.6" cy="11.4" r="0.44" fill="#3a7fb8" opacity="0.9"/><circle cx="51.9" cy="11.5" r="0.35" fill="#2b9bb2" opacity="0.9"/><circle cx="47.0" cy="14.7" r="0.43" fill="#ffffff" opacity="0.9"/><circle cx="49.6" cy="11.5" r="0.34" fill="#ffffff" opacity="0.9"/><circle cx="51.5" cy="10.3" r="0.53" fill="#ef8a52" opacity="0.9"/><circle cx="49.9" cy="12.0" r="0.49" fill="#2b9bb2" opacity="0.9"/><circle cx="47.7" cy="13.6" r="0.45" fill="#e2582e" opacity="0.9"/><circle cx="49.5" cy="11.4" r="0.41" fill="#3a7fb8" opacity="0.9"/><circle cx="47.3" cy="13.3" r="0.38" fill="#2b9bb2" opacity="0.9"/><circle cx="50.0" cy="12.8" r="0.44" fill="#3a7fb8" opacity="0.9"/><circle cx="51.4" cy="12.1" r="0.37" fill="#ef8a52" opacity="0.9"/><circle cx="50.3" cy="12.6" r="0.33" fill="#3a7fb8" opacity="0.9"/><circle cx="46.7" cy="15.6" r="0.40" fill="#7fc0e4" opacity="0.9"/><circle cx="51.9" cy="10.7" r="0.52" fill="#2b9bb2" opacity="0.9"/><circle cx="52.3" cy="11.3" r="0.35" fill="#ffffff" opacity="0.9"/><circle cx="47.3" cy="14.1" r="0.46" fill="#ffffff" opacity="0.9"/><circle cx="50.5" cy="11.4" r="0.48" fill="#2b9bb2" opacity="0.9"/><circle cx="47.7" cy="14.3" r="0.30" fill="#3a7fb8" opacity="0.9"/><circle cx="48.9" cy="13.4" r="0.54" fill="#3a7fb8" opacity="0.9"/><circle cx="50.7" cy="11.2" r="0.40" fill="#2b9bb2" opacity="0.9"/><circle cx="51.8" cy="11.9" r="0.41" fill="#2b9bb2" opacity="0.9"/><circle cx="47.8" cy="14.0" r="0.43" fill="#ffffff" opacity="0.9"/><circle cx="57.0" cy="14.1" r="0.31" fill="#ef8a52" opacity="0.9"/><circle cx="55.4" cy="12.1" r="0.31" fill="#3a7fb8" opacity="0.9"/><circle cx="56.4" cy="15.3" r="0.32" fill="#ffffff" opacity="0.9"/><circle cx="54.8" cy="12.5" r="0.31" fill="#e2582e" opacity="0.9"/><circle cx="56.2" cy="13.0" r="0.45" fill="#e2582e" opacity="0.9"/><circle cx="54.0" cy="10.4" r="0.39" fill="#2b9bb2" opacity="0.9"/><circle cx="54.2" cy="11.3" r="0.45" fill="#ffffff" opacity="0.9"/><circle cx="56.9" cy="14.3" r="0.54" fill="#7fc0e4" opacity="0.9"/><circle cx="53.9" cy="11.9" r="0.37" fill="#ffffff" opacity="0.9"/><circle cx="55.6" cy="11.9" r="0.43" fill="#e2582e" opacity="0.9"/><circle cx="55.1" cy="12.3" r="0.36" fill="#ef8a52" opacity="0.9"/><circle cx="54.7" cy="12.4" r="0.49" fill="#2b9bb2" opacity="0.9"/><circle cx="55.3" cy="11.9" r="0.39" fill="#ffffff" opacity="0.9"/><circle cx="56.8" cy="14.3" r="0.50" fill="#2b9bb2" opacity="0.9"/><circle cx="60.1" cy="12.4" r="0.41" fill="#e2582e" opacity="0.9"/><circle cx="59.1" cy="12.4" r="0.37" fill="#ffffff" opacity="0.9"/><circle cx="57.9" cy="13.8" r="0.32" fill="#ffffff" opacity="0.9"/><circle cx="58.2" cy="14.7" r="0.37" fill="#ffffff" opacity="0.9"/><circle cx="57.2" cy="15.1" r="0.47" fill="#2b9bb2" opacity="0.9"/><circle cx="60.1" cy="12.0" r="0.35" fill="#7fc0e4" opacity="0.9"/><circle cx="59.0" cy="13.1" r="0.41" fill="#ef8a52" opacity="0.9"/><circle cx="59.2" cy="13.2" r="0.32" fill="#e2582e" opacity="0.9"/><circle cx="59.2" cy="13.5" r="0.48" fill="#e2582e" opacity="0.9"/><circle cx="43.4" cy="25.6" r="0.34" fill="#7fc0e4" opacity="0.9"/><circle cx="39.3" cy="26.2" r="0.44" fill="#2b9bb2" opacity="0.9"/><circle cx="37.9" cy="28.4" r="0.32" fill="#3a7fb8" opacity="0.9"/><circle cx="38.9" cy="27.4" r="0.48" fill="#ef8a52" opacity="0.9"/><circle cx="46.0" cy="22.7" r="0.36" fill="#3a7fb8" opacity="0.9"/><circle cx="48.0" cy="22.2" r="0.40" fill="#ffffff" opacity="0.9"/><circle cx="42.9" cy="24.3" r="0.43" fill="#ffffff" opacity="0.9"/><circle cx="49.9" cy="21.1" r="0.51" fill="#ffffff" opacity="0.9"/><circle cx="40.7" cy="28.0" r="0.43" fill="#2b9bb2" opacity="0.9"/><circle cx="48.7" cy="21.3" r="0.36" fill="#7fc0e4" opacity="0.9"/><circle cx="45.8" cy="22.5" r="0.40" fill="#e2582e" opacity="0.9"/><circle cx="39.8" cy="26.9" r="0.48" fill="#ef8a52" opacity="0.9"/><circle cx="44.3" cy="24.0" r="0.49" fill="#2b9bb2" opacity="0.9"/><circle cx="50.1" cy="20.1" r="0.35" fill="#2b9bb2" opacity="0.9"/><circle cx="44.7" cy="24.1" r="0.41" fill="#e2582e" opacity="0.9"/><circle cx="45.4" cy="25.0" r="0.51" fill="#ffffff" opacity="0.9"/><circle cx="40.6" cy="26.9" r="0.42" fill="#2b9bb2" opacity="0.9"/><circle cx="46.9" cy="21.6" r="0.54" fill="#3a7fb8" opacity="0.9"/><circle cx="38.6" cy="27.5" r="0.52" fill="#e2582e" opacity="0.9"/><circle cx="39.6" cy="26.7" r="0.45" fill="#3a7fb8" opacity="0.9"/><circle cx="47.9" cy="21.7" r="0.46" fill="#7fc0e4" opacity="0.9"/><circle cx="39.0" cy="27.0" r="0.30" fill="#7fc0e4" opacity="0.9"/><circle cx="45.6" cy="22.5" r="0.52" fill="#2b9bb2" opacity="0.9"/><circle cx="42.8" cy="25.7" r="0.30" fill="#ef8a52" opacity="0.9"/><circle cx="48.2" cy="21.6" r="0.35" fill="#ffffff" opacity="0.9"/><circle cx="38.6" cy="28.8" r="0.38" fill="#ef8a52" opacity="0.9"/><circle cx="42.0" cy="25.5" r="0.39" fill="#2b9bb2" opacity="0.9"/><circle cx="47.9" cy="21.9" r="0.46" fill="#2b9bb2" opacity="0.9"/><circle cx="49.1" cy="21.5" r="0.44" fill="#ef8a52" opacity="0.9"/><circle cx="40.8" cy="27.6" r="0.53" fill="#e2582e" opacity="0.9"/><circle cx="47.5" cy="22.3" r="0.54" fill="#ef8a52" opacity="0.9"/><circle cx="40.0" cy="25.9" r="0.48" fill="#3a7fb8" opacity="0.9"/><circle cx="44.5" cy="23.8" r="0.41" fill="#ffffff" opacity="0.9"/><circle cx="41.6" cy="24.8" r="0.34" fill="#7fc0e4" opacity="0.9"/><circle cx="42.4" cy="25.9" r="0.36" fill="#2b9bb2" opacity="0.9"/><circle cx="45.9" cy="23.7" r="0.53" fill="#ffffff" opacity="0.9"/><circle cx="38.9" cy="26.7" r="0.51" fill="#7fc0e4" opacity="0.9"/><circle cx="41.9" cy="26.6" r="0.45" fill="#3a7fb8" opacity="0.9"/><circle cx="43.2" cy="25.7" r="0.37" fill="#2b9bb2" opacity="0.9"/><circle cx="47.9" cy="21.5" r="0.35" fill="#3a7fb8" opacity="0.9"/><circle cx="44.0" cy="25.2" r="0.36" fill="#7fc0e4" opacity="0.9"/><circle cx="37.9" cy="28.2" r="0.44" fill="#7fc0e4" opacity="0.9"/><circle cx="46.1" cy="23.6" r="0.44" fill="#e2582e" opacity="0.9"/><circle cx="48.6" cy="20.3" r="0.42" fill="#e2582e" opacity="0.9"/><circle cx="40.0" cy="27.6" r="0.37" fill="#ffffff" opacity="0.9"/><circle cx="50.1" cy="20.3" r="0.44" fill="#2b9bb2" opacity="0.9"/><circle cx="45.9" cy="24.4" r="0.45" fill="#ffffff" opacity="0.9"/><circle cx="47.6" cy="22.0" r="0.36" fill="#ffffff" opacity="0.9"/><circle cx="38.1" cy="28.0" r="0.41" fill="#2b9bb2" opacity="0.9"/><circle cx="43.0" cy="26.6" r="0.38" fill="#7fc0e4" opacity="0.9"/><circle cx="40.9" cy="27.2" r="0.35" fill="#7fc0e4" opacity="0.9"/><circle cx="42.5" cy="24.7" r="0.34" fill="#3a7fb8" opacity="0.9"/><circle cx="38.7" cy="28.4" r="0.46" fill="#2b9bb2" opacity="0.9"/><circle cx="49.6" cy="21.1" r="0.45" fill="#ffffff" opacity="0.9"/><circle cx="42.3" cy="26.9" r="0.49" fill="#3a7fb8" opacity="0.9"/><circle cx="39.7" cy="28.0" r="0.51" fill="#3a7fb8" opacity="0.9"/><circle cx="50.2" cy="21.1" r="0.41" fill="#3a7fb8" opacity="0.9"/><circle cx="49.0" cy="21.0" r="0.48" fill="#3a7fb8" opacity="0.9"/><circle cx="54.2" cy="28.8" r="0.36" fill="#2b9bb2" opacity="0.9"/><circle cx="55.6" cy="26.2" r="0.47" fill="#ffffff" opacity="0.9"/><circle cx="53.3" cy="29.7" r="0.52" fill="#e2582e" opacity="0.9"/><circle cx="55.2" cy="24.8" r="0.46" fill="#e2582e" opacity="0.9"/><circle cx="55.2" cy="25.4" r="0.33" fill="#7fc0e4" opacity="0.9"/><circle cx="53.4" cy="28.3" r="0.31" fill="#ef8a52" opacity="0.9"/><circle cx="55.3" cy="21.3" r="0.34" fill="#3a7fb8" opacity="0.9"/><circle cx="53.3" cy="27.8" r="0.38" fill="#ffffff" opacity="0.9"/><circle cx="55.5" cy="25.5" r="0.35" fill="#e2582e" opacity="0.9"/><circle cx="52.6" cy="19.5" r="0.30" fill="#ffffff" opacity="0.9"/><circle cx="53.9" cy="27.3" r="0.46" fill="#2b9bb2" opacity="0.9"/><circle cx="55.1" cy="24.6" r="0.48" fill="#3a7fb8" opacity="0.9"/><circle cx="55.9" cy="21.5" r="0.32" fill="#3a7fb8" opacity="0.9"/><circle cx="55.2" cy="22.0" r="0.35" fill="#ef8a52" opacity="0.9"/><circle cx="54.9" cy="20.8" r="0.45" fill="#2b9bb2" opacity="0.9"/><circle cx="56.9" cy="21.2" r="0.37" fill="#e2582e" opacity="0.9"/><circle cx="52.0" cy="20.9" r="0.43" fill="#2b9bb2" opacity="0.9"/><circle cx="51.6" cy="19.7" r="0.50" fill="#3a7fb8" opacity="0.9"/><circle cx="52.8" cy="19.2" r="0.37" fill="#7fc0e4" opacity="0.9"/><circle cx="54.3" cy="26.8" r="0.46" fill="#2b9bb2" opacity="0.9"/><circle cx="54.4" cy="28.2" r="0.32" fill="#7fc0e4" opacity="0.9"/><circle cx="55.8" cy="21.8" r="0.43" fill="#ef8a52" opacity="0.9"/><circle cx="53.4" cy="29.2" r="0.33" fill="#7fc0e4" opacity="0.9"/><circle cx="54.8" cy="25.8" r="0.36" fill="#e2582e" opacity="0.9"/><circle cx="53.8" cy="27.9" r="0.35" fill="#2b9bb2" opacity="0.9"/><circle cx="53.8" cy="19.6" r="0.45" fill="#7fc0e4" opacity="0.9"/><circle cx="53.4" cy="28.4" r="0.51" fill="#ef8a52" opacity="0.9"/><circle cx="52.4" cy="19.8" r="0.46" fill="#e2582e" opacity="0.9"/><circle cx="51.5" cy="19.6" r="0.49" fill="#ef8a52" opacity="0.9"/><circle cx="55.7" cy="24.2" r="0.36" fill="#ef8a52" opacity="0.9"/><circle cx="54.9" cy="27.1" r="0.38" fill="#2b9bb2" opacity="0.9"/><circle cx="54.2" cy="26.5" r="0.33" fill="#2b9bb2" opacity="0.9"/><circle cx="52.5" cy="29.5" r="0.30" fill="#2b9bb2" opacity="0.9"/><circle cx="53.3" cy="26.9" r="0.42" fill="#ef8a52" opacity="0.9"/><circle cx="54.7" cy="21.0" r="0.37" fill="#e2582e" opacity="0.9"/><circle cx="52.6" cy="20.1" r="0.39" fill="#e2582e" opacity="0.9"/><circle cx="56.1" cy="23.9" r="0.40" fill="#7fc0e4" opacity="0.9"/><circle cx="53.7" cy="21.1" r="0.42" fill="#7fc0e4" opacity="0.9"/><circle cx="53.3" cy="27.0" r="0.35" fill="#2b9bb2" opacity="0.9"/><circle cx="56.5" cy="23.1" r="0.35" fill="#ffffff" opacity="0.9"/><circle cx="56.0" cy="21.3" r="0.55" fill="#ffffff" opacity="0.9"/><circle cx="55.4" cy="21.4" r="0.31" fill="#2b9bb2" opacity="0.9"/><circle cx="55.4" cy="21.9" r="0.49" fill="#7fc0e4" opacity="0.9"/><circle cx="54.4" cy="28.7" r="0.33" fill="#ef8a52" opacity="0.9"/><circle cx="52.7" cy="19.5" r="0.48" fill="#e2582e" opacity="0.9"/><circle cx="51.1" cy="19.4" r="0.51" fill="#2b9bb2" opacity="0.9"/><circle cx="55.3" cy="25.5" r="0.38" fill="#2b9bb2" opacity="0.9"/><circle cx="52.8" cy="27.3" r="0.31" fill="#7fc0e4" opacity="0.9"/><circle cx="45.8" cy="15.8" r="0.6" fill="#2b9bb2" opacity="0.9"/><circle cx="60.2" cy="11.8" r="0.6" fill="#2b9bb2" opacity="0.9"/><circle cx="37.5" cy="29.2" r="0.6" fill="#8a6a5a" opacity="0.9"/><circle cx="53.1" cy="30.0" r="0.6" fill="#8a6a5a" opacity="0.9"/><circle cx="46.4" cy="14.4" r="0.6" fill="#e2582e" opacity="0.9"/><circle cx="56.8" cy="14.4" r="0.6" fill="#e2582e" opacity="0.9"/><circle cx="46.7" cy="17.8" r="0.3" fill="#b8dcf0" opacity="0.85"/><circle cx="45.9" cy="17.1" r="0.3" fill="#f6c9a6" opacity="0.85"/><circle cx="45.0" cy="17.7" r="0.3" fill="#f6c9a6" opacity="0.85"/><circle cx="43.9" cy="19.3" r="0.3" fill="#b8dcf0" opacity="0.85"/><circle cx="41.8" cy="18.1" r="0.3" fill="#f6c9a6" opacity="0.85"/><circle cx="40.9" cy="19.9" r="0.3" fill="#f6c9a6" opacity="0.85"/><circle cx="39.9" cy="19.1" r="0.3" fill="#b8dcf0" opacity="0.85"/><circle cx="39.5" cy="18.9" r="0.3" fill="#f6c9a6" opacity="0.85"/><circle cx="37.5" cy="19.5" r="0.3" fill="#f6c9a6" opacity="0.85"/><circle cx="36.2" cy="18.8" r="0.3" fill="#b8dcf0" opacity="0.85"/><circle cx="34.7" cy="20.9" r="0.3" fill="#f6c9a6" opacity="0.85"/><circle cx="34.5" cy="21.7" r="0.3" fill="#f6c9a6" opacity="0.85"/><circle cx="34.0" cy="20.4" r="0.3" fill="#b8dcf0" opacity="0.85"/><circle cx="32.3" cy="22.6" r="0.3" fill="#f6c9a6" opacity="0.85"/><circle cx="30.4" cy="22.1" r="0.3" fill="#f6c9a6" opacity="0.85"/><circle cx="30.0" cy="23.2" r="0.3" fill="#b8dcf0" opacity="0.85"/><circle cx="29.2" cy="21.2" r="0.3" fill="#f6c9a6" opacity="0.85"/><circle cx="27.7" cy="20.9" r="0.3" fill="#f6c9a6" opacity="0.85"/><circle cx="26.2" cy="22.2" r="0.3" fill="#b8dcf0" opacity="0.85"/><circle cx="24.4" cy="22.4" r="0.3" fill="#f6c9a6" opacity="0.85"/><circle cx="23.7" cy="23.0" r="0.3" fill="#f6c9a6" opacity="0.85"/><circle cx="22.5" cy="22.2" r="0.3" fill="#b8dcf0" opacity="0.85"/><circle cx="21.5" cy="23.9" r="0.3" fill="#f6c9a6" opacity="0.85"/><circle cx="20.0" cy="24.6" r="0.3" fill="#f6c9a6" opacity="0.85"/><circle cx="19.0" cy="23.4" r="0.3" fill="#b8dcf0" opacity="0.85"/><circle cx="18.0" cy="24.4" r="0.3" fill="#f6c9a6" opacity="0.85"/><circle cx="16.5" cy="25.0" r="0.3" fill="#f6c9a6" opacity="0.85"/><circle cx="16.3" cy="25.1" r="0.3" fill="#b8dcf0" opacity="0.85"/><circle cx="15.1" cy="24.1" r="0.3" fill="#f6c9a6" opacity="0.85"/><circle cx="13.5" cy="25.1" r="0.3" fill="#f6c9a6" opacity="0.85"/><circle cx="11.8" cy="25.4" r="0.3" fill="#b8dcf0" opacity="0.85"/><circle cx="10.6" cy="25.8" r="0.3" fill="#f6c9a6" opacity="0.85"/><circle cx="10.3" cy="25.9" r="0.3" fill="#f6c9a6" opacity="0.85"/><circle cx="8.8" cy="25.6" r="0.3" fill="#b8dcf0" opacity="0.85"/><circle cx="7.1" cy="26.0" r="0.3" fill="#f6c9a6" opacity="0.85"/><circle cx="7.4" cy="26.8" r="0.3" fill="#f6c9a6" opacity="0.85"/><circle cx="5.2" cy="27.2" r="0.3" fill="#b8dcf0" opacity="0.85"/><circle cx="3.9" cy="26.9" r="0.3" fill="#f6c9a6" opacity="0.85"/><circle cx="3.5" cy="28.3" r="0.3" fill="#f6c9a6" opacity="0.85"/><circle cx="1.9" cy="27.6" r="0.3" fill="#b8dcf0" opacity="0.85"/></svg>
<div style="left:194.3px;top:73.3px;width:269.8px;height:15.6px;background:#04808c;"></div>
<svg class="t" style="left:197.2px;top:83.90px;" width="1" height="1"><text x="0" y="0" font-size="8.6" fill="#fff" style="font-weight:bold;letter-spacing:-0.08px;">Anchors Demo</text></svg>
<div style="left:194.3px;top:88.9px;width:269.8px;height:22.4px;background:#f5f5f5;"></div>
<div style="left:194.3px;top:111.1px;width:269.8px;height:1.3px;background:#4fb0ba;"></div>
<div style="left:199.1px;top:92px;width:7.8px;height:7.8px;border-radius:50%;background:#5e5e5e;"></div>
<div style="left:202.5px;top:93.6px;width:1px;height:1px;background:#c4c4c4;"></div>
<div style="left:202.5px;top:95.2px;width:1px;height:3px;background:#c4c4c4;"></div>
<svg class="t" style="left:212.7px;top:99.10px;" width="1" height="1"><text x="0" y="0" font-size="7.1" fill="#3c3c3c" style="letter-spacing:0.026px;">This demo shows anchoring of controls on the web form. Resize the browser</text></svg>
<svg class="t" style="left:212.7px;top:106.00px;" width="1" height="1"><text x="0" y="0" font-size="7.1" fill="#3c3c3c" style="letter-spacing:0.03px;">window to see the effect.</text></svg>
<div style="left:204px;top:119.8px;width:163.6px;height:112.4px;background:#f0f0f0;border:0.5px solid #e2e2e2;"></div>
<svg class="t" style="left:213.8px;top:133.80px;" width="1" height="1"><text x="0" y="0" font-size="4.25" fill="#111" style="stroke:#111;stroke-width:0.08px;">Left anchored label 1</text></svg>
<svg class="t" style="left:213.8px;top:149.50px;" width="1" height="1"><text x="0" y="0" font-size="4.25" fill="#111" style="stroke:#111;stroke-width:0.08px;">Left anchored label 2</text></svg>
<div style="left:311.3px;top:129px;width:48.6px;height:9.5px;background:#fff;border:0.7px solid #a8a8a8;border-radius:1.2px;"></div>
<svg class="t" style="left:313.1px;top:135.50px;" width="1" height="1"><text x="0" y="0" font-size="4.2" fill="#111" style="stroke:#111;stroke-width:0.08px;">Anchor right</text></svg>
<div style="left:311.3px;top:144.8px;width:48.6px;height:9.5px;background:#fff;border:0.7px solid #a8a8a8;border-radius:1.2px;"></div>
<svg class="t" style="left:313.1px;top:151.30px;" width="1" height="1"><text x="0" y="0" font-size="4.2" fill="#111" style="stroke:#111;stroke-width:0.08px;">Anchor left,right</text></svg>
<div style="left:214px;top:168.2px;width:145.9px;height:57.4px;background:#fff;border:0.7px solid #9d9d9d;"></div>
<svg class="t" style="left:215.2px;top:173.60px;" width="1" height="1"><text x="0" y="0" font-size="4.25" fill="#111" style="stroke:#111;stroke-width:0.08px;">Left,Top / Right,Bottom anchored memo</text></svg>
<div style="left:316.4px;top:219.4px;width:148px;height:49.8px;background:#fff;border:0.5px solid #c4c4c4;border-radius:2.6px;box-shadow:0 2.5px 7px rgba(0,0,0,0.22),0 0 2px rgba(0,0,0,0.14);overflow:hidden;"><div style="left:0;top:0;width:100%;height:11.4px;background:#f3f3f3;"></div><div style="left:0;top:32.4px;width:100%;height:17.4px;background:#f3f3f3;border-top:0.5px solid #e6e6e6;"></div></div>
<svg class="t" style="left:318.9px;top:226.76px;" width="1" height="1"><text x="0" y="0" font-size="4.8" fill="#777" style="">Visual Studio Code</text></svg>
<svg style="left:455.4px;top:223px;" width="4" height="4" viewBox="0 0 4 4"><path d="M0.3 0.3 L3.7 3.7 M3.7 0.3 L0.3 3.7" stroke="#777" stroke-width="0.5"/></svg>
<div style="left:320.5px;top:235.3px;width:12.6px;height:12.6px;border-radius:50%;background:#de481b;"></div>
<svg style="left:324.3px;top:239.1px;" width="5" height="5" viewBox="0 0 5 5"><path d="M0.5 0.5 L4.5 4.5 M4.5 0.5 L0.5 4.5" stroke="#fff" stroke-width="1.05"/></svg>
<svg class="t" style="left:337px;top:242.75px;" width="1" height="1"><text x="0" y="0" font-size="4.9" fill="#222" style="letter-spacing:-0.046px;">Unable to launch browser: "Unable to attach to browser"</text></svg>
<div style="left:376.4px;top:256px;width:53.3px;height:9.3px;background:#fbfbfb;border:0.7px solid #2f7fd0;border-radius:1.3px;"></div>
<svg class="t" style="left:383.9px;top:262.60px;" width="1" height="1"><text x="0" y="0" font-size="4.9" fill="#1a1a1a" style="letter-spacing:-0.1px;">Open 'launch.json'</text></svg>
<div style="left:432.3px;top:256px;width:26.8px;height:9.3px;background:#fbfbfb;border:0.5px solid #cfcfcf;border-radius:1.3px;"></div>
<svg class="t" style="left:438.8px;top:262.60px;" width="1" height="1"><text x="0" y="0" font-size="4.9" fill="#1a1a1a" style="letter-spacing:-0.17px;">Cancel</text></svg>
<div style="left:573.4px;top:25.4px;width:104.8px;height:347px;background:#fff;border:0.5px solid #e4e4e4;"></div>
<div style="left:573.4px;top:25.3px;width:104.8px;height:13.4px;background:#efefef;"></div>
<div style="left:577.7px;top:25.4px;width:42.3px;height:12px;background:#fafcff;"></div>
<div style="left:577.7px;top:36.8px;width:42.3px;height:1.4px;background:#2b8be0;"></div>
<svg class="t" style="left:583.6px;top:33.70px;" width="1" height="1"><text x="0" y="0" font-size="6.3" fill="#2386e0" style="letter-spacing:-0.27px;">Tool Palette</text></svg>
<svg style="left:670.6px;top:29.6px;" width="4" height="4" viewBox="0 0 4 4"><path d="M0.3 0.3 L3.7 3.7 M3.7 0.3 L0.3 3.7" stroke="#aaa" stroke-width="0.6"/></svg>
<div style="left:573.9px;top:38.7px;width:103.8px;height:14.8px;background:#f6f6f6;"></div>
<div style="left:575.8px;top:40.7px;width:19.7px;height:10.8px;background:#fbfbfb;border:0.5px solid #eaeaea;border-radius:1px;"></div>
<div style="left:578.1px;top:43.2px;width:1.7px;height:4.3px;background:#222;"></div>
<div style="left:581.3px;top:43.2px;width:1.3px;height:0.8px;background:#8a8a8a;"></div>
<div style="left:581.3px;top:44.300000000000004px;width:1.3px;height:0.8px;background:#8a8a8a;"></div>
<div style="left:581.3px;top:45.400000000000006px;width:1.3px;height:0.8px;background:#8a8a8a;"></div>
<div style="left:581.3px;top:46.5px;width:1.3px;height:0.8px;background:#8a8a8a;"></div>
<div style="left:583.0px;top:43.2px;width:1.3px;height:0.8px;background:#8a8a8a;"></div>
<div style="left:583.0px;top:44.300000000000004px;width:1.3px;height:0.8px;background:#8a8a8a;"></div>
<div style="left:583.0px;top:45.400000000000006px;width:1.3px;height:0.8px;background:#8a8a8a;"></div>
<div style="left:583.0px;top:46.5px;width:1.3px;height:0.8px;background:#8a8a8a;"></div>
<div style="left:584.6999999999999px;top:43.2px;width:1.3px;height:0.8px;background:#8a8a8a;"></div>
<div style="left:584.6999999999999px;top:44.300000000000004px;width:1.3px;height:0.8px;background:#8a8a8a;"></div>
<div style="left:584.6999999999999px;top:45.400000000000006px;width:1.3px;height:0.8px;background:#8a8a8a;"></div>
<div style="left:584.6999999999999px;top:46.5px;width:1.3px;height:0.8px;background:#8a8a8a;"></div>
<svg style="left:590px;top:45.1px;" width="3.4" height="2.6" viewBox="0 0 3.4 2.6"><path d="M0.3 0.3 L1.7 1.9 L3.1 0.3" fill="none" stroke="#222" stroke-width="1"/></svg>
<div style="left:598.1px;top:40.4px;width:10.8px;height:10.9px;background:#0f6cbd;border-radius:1.2px;"></div>
<svg style="left:601.3px;top:42.6px;" width="5" height="7" viewBox="0 0 5 7"><path d="M0.3 0.2 L0.3 5.6 L1.6 4.4 L2.6 6.6 L3.4 6.2 L2.5 4.1 L4.2 4 Z" fill="#fff"/></svg>
<div style="left:610.2px;top:41px;width:60.5px;height:10.2px;background:#fff;border-radius:1px;"></div>
<svg class="t" style="left:612.7px;top:47.60px;" width="1" height="1"><text x="0" y="0" font-size="5.8" fill="#7a7a7a" style="letter-spacing:-0.12px;">Search</text></svg>
<div style="left:573.9px;top:53.5px;width:96.8px;height:12.9px;background:#6cb0de;"></div>
<svg class="t" style="left:583.2px;top:61.70px;" width="1" height="1"><text x="0" y="0" font-size="5.8" fill="#111" style="font-weight:bold;letter-spacing:-0.2px;">TMS Web</text></svg>
<svg style="left:577.2px;top:58.8px;" width="3.4" height="2.4" viewBox="0 0 3.4 2.4"><path d="M0.3 0.3 L1.7 1.9 L3.1 0.3" fill="none" stroke="#a9d2ee" stroke-width="0.7"/></svg>
<div style="left:573.9px;top:79.18px;width:96.8px;height:0.5px;background:#e9e9e9;"></div>
<svg class="t" style="left:586.4px;top:74.80px;" width="1" height="1"><text x="0" y="0" font-size="5.6" fill="#555" style="">Frames</text></svg>
<svg style="left:576.6px;top:69.39999999999999px;" width="6.4" height="6" viewBox="0 0 6.4 6"><rect x="0.8" y="0.6" width="5" height="4.6" fill="#ececec" /><rect x="0.8" y="0.6" width="5" height="4.6" fill="none" stroke="#cfcfcf" stroke-width="0.4"/><path d="M2.2 2 L4.2 3.8 M4.2 2 L2.2 3.8" stroke="#777" stroke-width="0.7"/></svg>
<div style="left:573.9px;top:92.21000000000001px;width:96.8px;height:0.5px;background:#e9e9e9;"></div>
<svg class="t" style="left:586.4px;top:87.83px;" width="1" height="1"><text x="0" y="0" font-size="5.6" fill="#555" style="">TWebLabel</text></svg>
<svg style="left:576.6px;top:82.42999999999999px;" width="6.4" height="6" viewBox="0 0 6.4 6"><rect x="0" y="0" width="2.6" height="2.4" fill="#1f9aa0"/><rect x="3.4" y="0.3" width="2" height="1.6" fill="#e58a2a" opacity="0.8"/><rect x="1.6" y="1.6" width="2.4" height="2.2" fill="#d8e4ee"/><path d="M0.9 3.2 L2.3 5.2 L4.4 2.2" fill="none" stroke="#d9ab1c" stroke-width="1"/><path d="M5 1 L5 5.3 L6.4 5.3" fill="none" stroke="#222" stroke-width="0.8"/></svg>
<div style="left:573.9px;top:105.24000000000001px;width:96.8px;height:0.5px;background:#e9e9e9;"></div>
<svg class="t" style="left:586.4px;top:100.86px;" width="1" height="1"><text x="0" y="0" font-size="5.6" fill="#555" style="">TWebButton</text></svg>
<svg style="left:576.6px;top:95.46px;" width="6.4" height="6" viewBox="0 0 6.4 6"><rect x="0.5" y="1" width="5.6" height="4.6" fill="#dbe7f6" stroke="#6f93c4" stroke-width="0.6"/><rect x="1" y="4.2" width="4.6" height="1.2" fill="#5f86c0" /><rect x="2.4" y="2.2" width="2" height="1.4" fill="#fff" /><rect x="0" y="0" width="2.4" height="2.2" fill="#1f9aa0"/></svg>
<div style="left:573.9px;top:118.27000000000001px;width:96.8px;height:0.5px;background:#e9e9e9;"></div>
<svg class="t" style="left:586.4px;top:113.89px;" width="1" height="1"><text x="0" y="0" font-size="5.6" fill="#555" style="">TWebEdit</text></svg>
<svg style="left:576.6px;top:108.48999999999998px;" width="6.4" height="6" viewBox="0 0 6.4 6"><rect x="0.5" y="1.1" width="5.6" height="4.6" fill="#fff" stroke="#566f8a" stroke-width="0.6"/><rect x="0" y="0" width="2.6" height="2.4" fill="#1f9aa0"/><path d="M2.2 4.6 L3.2 2.4 L4.2 4.6 M2.6 3.8 L3.8 3.8" fill="none" stroke="#444" stroke-width="0.5"/><rect x="3.6" y="0.4" width="1.6" height="1" fill="#e58a2a" opacity="0.7"/></svg>
<div style="left:573.9px;top:131.3px;width:96.8px;height:0.5px;background:#e9e9e9;"></div>
<svg class="t" style="left:586.4px;top:126.92px;" width="1" height="1"><text x="0" y="0" font-size="5.6" fill="#555" style="">TWebSpinEdit</text></svg>
<svg style="left:576.6px;top:121.51999999999998px;" width="6.4" height="6" viewBox="0 0 6.4 6"><rect x="2.6" y="0.8" width="3.6" height="4.2" fill="#1e2f5a" /><rect x="3.4" y="1.8" width="1.6" height="1.6" fill="#e8eef8" /><rect x="0.6" y="2.4" width="2" height="3" fill="#8fb0d0" /><rect x="0" y="0" width="2.4" height="2.2" fill="#1f9aa0"/></svg>
<div style="left:573.9px;top:144.32999999999998px;width:96.8px;height:0.5px;background:#e9e9e9;"></div>
<svg class="t" style="left:586.4px;top:139.95px;" width="1" height="1"><text x="0" y="0" font-size="5.6" fill="#555" style="">TWebDateTimePicker</text></svg>
<svg style="left:576.6px;top:134.54999999999998px;" width="6.4" height="6" viewBox="0 0 6.4 6"><rect x="0.6" y="0.9" width="5.4" height="4.6" fill="#eef1f4" stroke="#8a97a6" stroke-width="0.6"/><rect x="2.2" y="2.2" width="2.4" height="2" fill="#f0a35a" /><rect x="0" y="0" width="2.4" height="2.2" fill="#1f9aa0"/></svg>
<div style="left:573.9px;top:157.36px;width:96.8px;height:0.5px;background:#e9e9e9;"></div>
<svg class="t" style="left:586.4px;top:152.98px;" width="1" height="1"><text x="0" y="0" font-size="5.6" fill="#555" style="">TWebListBox</text></svg>
<svg style="left:576.6px;top:147.57999999999998px;" width="6.4" height="6" viewBox="0 0 6.4 6"><rect x="0.5" y="1" width="5.6" height="4.6" fill="#7f86dc" /><rect x="4" y="1" width="2.1" height="4.6" fill="#2f3f7a" /><rect x="1.2" y="2.6" width="2.4" height="1" fill="#e6e9ff" /><rect x="0" y="0" width="2.4" height="2.2" fill="#1f9aa0"/></svg>
<div style="left:573.9px;top:170.39px;width:96.8px;height:0.5px;background:#e9e9e9;"></div>
<svg class="t" style="left:586.4px;top:166.01px;" width="1" height="1"><text x="0" y="0" font-size="5.6" fill="#555" style="">TWebComboBox</text></svg>
<svg style="left:576.6px;top:160.60999999999999px;" width="6.4" height="6" viewBox="0 0 6.4 6"><rect x="1.4" y="1.2" width="3.6" height="4.4" fill="#f2f2f2" stroke="#9a9a9a" stroke-width="0.5"/><rect x="1.4" y="0.4" width="3.6" height="1.2" fill="#1f9aa0" /><rect x="2.4" y="2.6" width="1.6" height="1.2" fill="#c8c8c8" /></svg>
<div style="left:573.9px;top:183.42000000000002px;width:96.8px;height:0.5px;background:#e9e9e9;"></div>
<svg class="t" style="left:586.4px;top:179.04px;" width="1" height="1"><text x="0" y="0" font-size="5.6" fill="#555" style="">TWebColorPicker</text></svg>
<svg style="left:576.6px;top:173.64px;" width="6.4" height="6" viewBox="0 0 6.4 6"><rect x="0.5" y="1" width="5.6" height="4.4" fill="#5a8a50" /><rect x="0.5" y="1" width="2.8" height="2.2" fill="#d05a5a" /><rect x="3.3" y="1" width="2.8" height="2.2" fill="#5a6fd0" /><rect x="3.3" y="3.2" width="2.8" height="2.2" fill="#3a3a6a" /><rect x="0" y="0" width="2.4" height="2.2" fill="#1f9aa0"/></svg>
<div style="left:573.9px;top:196.45px;width:96.8px;height:0.5px;background:#e9e9e9;"></div>
<svg class="t" style="left:586.4px;top:192.07px;" width="1" height="1"><text x="0" y="0" font-size="5.6" fill="#555" style="">TWebCheckBox</text></svg>
<svg style="left:576.6px;top:186.67px;" width="6.4" height="6" viewBox="0 0 6.4 6"><rect x="0.8" y="1" width="4.8" height="4.6" fill="#f4f7fa" stroke="#7f93a8" stroke-width="0.6"/><path d="M2 2.4 L4.4 4.6 M4.4 2.4 L2 4.6" stroke="#2a3a5a" stroke-width="0.8"/><rect x="0" y="0" width="2.4" height="2.2" fill="#1f9aa0"/></svg>
<div style="left:573.9px;top:209.48px;width:96.8px;height:0.5px;background:#e9e9e9;"></div>
<svg class="t" style="left:586.4px;top:205.10px;" width="1" height="1"><text x="0" y="0" font-size="5.6" fill="#555" style="">TWebRadioButton</text></svg>
<svg style="left:576.6px;top:199.69999999999996px;" width="6.4" height="6" viewBox="0 0 6.4 6"><rect x="1" y="1" width="4.6" height="4.6" fill="#f8f8f8" stroke="#c8c8c8" stroke-width="0.4"/><rect x="2.4" y="2.2" width="2.2" height="2" fill="#222" /><rect x="0" y="0" width="2.4" height="2.2" fill="#1f9aa0"/></svg>
<div style="left:573.9px;top:222.51px;width:96.8px;height:0.5px;background:#e9e9e9;"></div>
<svg class="t" style="left:586.4px;top:218.13px;" width="1" height="1"><text x="0" y="0" font-size="5.6" fill="#555" style="">TWebMemo</text></svg>
<svg style="left:576.6px;top:212.73px;" width="6.4" height="6" viewBox="0 0 6.4 6"><rect x="0.6" y="0.9" width="5" height="4.8" fill="#f6f1e6" stroke="#b9b2a4" stroke-width="0.5"/><rect x="0" y="0" width="2.6" height="2.4" fill="#1f9aa0"/><path d="M1.6 3.1 L4.6 3.1 M1.6 4.3 L4.6 4.3" stroke="#c79a5b" stroke-width="0.6"/></svg>
<div style="left:573.9px;top:235.54px;width:96.8px;height:0.5px;background:#e9e9e9;"></div>
<svg class="t" style="left:586.4px;top:231.16px;" width="1" height="1"><text x="0" y="0" font-size="5.6" fill="#555" style="">TWebRadioGroup</text></svg>
<svg style="left:576.6px;top:225.75999999999996px;" width="6.4" height="6" viewBox="0 0 6.4 6"><rect x="1.6" y="0.8" width="3.6" height="5" fill="#f6f6f6" stroke="#8a8a8a" stroke-width="0.5"/><rect x="2.6" y="2" width="1.2" height="1" fill="#444" /><rect x="2.6" y="3.8" width="1.2" height="1" fill="#444" /><rect x="0" y="0" width="2.4" height="2.2" fill="#1f9aa0"/></svg>
<div style="left:573.9px;top:248.57px;width:96.8px;height:0.5px;background:#e9e9e9;"></div>
<svg class="t" style="left:586.4px;top:244.19px;" width="1" height="1"><text x="0" y="0" font-size="5.6" fill="#555" style="">TWebPaintBox</text></svg>
<svg style="left:576.6px;top:238.79px;" width="6.4" height="6" viewBox="0 0 6.4 6"><path d="M1 5.4 L3.6 2.8" stroke="#7a5a3a" stroke-width="1"/><rect x="3.2" y="0.6" width="2.8" height="2.2" fill="#2a3a6a" /><rect x="1.6" y="3.4" width="1.6" height="1.4" fill="#e0a050" /><rect x="0" y="0" width="2.4" height="2.2" fill="#1f9aa0"/></svg>
<div style="left:573.9px;top:261.6px;width:96.8px;height:0.5px;background:#e9e9e9;"></div>
<svg class="t" style="left:586.4px;top:257.22px;" width="1" height="1"><text x="0" y="0" font-size="5.6" fill="#555" style="">TWebTrackBar</text></svg>
<svg style="left:576.6px;top:251.81999999999996px;" width="6.4" height="6" viewBox="0 0 6.4 6"><rect x="0.8" y="4.4" width="5.4" height="0.7" fill="#555" /><rect x="2.6" y="1.6" width="3.2" height="0.7" fill="#4a7ac8" /><rect x="1.8" y="2.6" width="1.4" height="1.4" fill="#8fb0e0" /><rect x="0" y="0" width="2.4" height="2.2" fill="#1f9aa0"/></svg>
<div style="left:573.9px;top:274.63px;width:96.8px;height:0.5px;background:#e9e9e9;"></div>
<svg class="t" style="left:586.4px;top:270.25px;" width="1" height="1"><text x="0" y="0" font-size="5.6" fill="#555" style="">TWebScrollBox</text></svg>
<svg style="left:576.6px;top:264.85px;" width="6.4" height="6" viewBox="0 0 6.4 6"><rect x="0.6" y="0.8" width="5.2" height="4.8" fill="#e6eef8" stroke="#4a5f7f" stroke-width="0.6"/><rect x="4.6" y="0.8" width="1.2" height="4.8" fill="#2f4468" /><rect x="0.6" y="4.6" width="5.2" height="1" fill="#2f4468" /><rect x="0" y="0" width="2.4" height="2.2" fill="#1f9aa0"/></svg>
<div style="left:573.9px;top:287.65999999999997px;width:96.8px;height:0.5px;background:#e9e9e9;"></div>
<svg class="t" style="left:586.4px;top:283.28px;" width="1" height="1"><text x="0" y="0" font-size="5.6" fill="#555" style="">TWebSplitter</text></svg>
<svg style="left:576.6px;top:277.88px;" width="6.4" height="6" viewBox="0 0 6.4 6"><rect x="2.6" y="0.6" width="0.9" height="5.2" fill="#6a8ab8" /><rect x="3.5" y="1.8" width="2.4" height="0.7" fill="#9ab" /><rect x="0.6" y="3" width="2" height="0.7" fill="#9ab" /><rect x="0" y="0" width="2.4" height="2.2" fill="#1f9aa0"/></svg>
<div style="left:573.9px;top:300.69px;width:96.8px;height:0.5px;background:#e9e9e9;"></div>
<svg class="t" style="left:586.4px;top:296.31px;" width="1" height="1"><text x="0" y="0" font-size="5.6" fill="#555" style="">TWebPanel</text></svg>
<svg style="left:576.6px;top:290.91px;" width="6.4" height="6" viewBox="0 0 6.4 6"><rect x="0.5" y="0.5" width="5.6" height="5.2" fill="#e4edf5" stroke="#5f7f9f" stroke-width="0.6"/><rect x="1.4" y="1.6" width="3.8" height="3" fill="#fff" opacity="0.8"/><rect x="0" y="0" width="2.6" height="2.4" fill="#1f9aa0"/><path d="M0.5 5.7 L6.1 5.7" stroke="#3f5f7f" stroke-width="0.6"/></svg>
<div style="left:573.9px;top:313.72px;width:96.8px;height:0.5px;background:#e9e9e9;"></div>
<svg class="t" style="left:586.4px;top:309.34px;" width="1" height="1"><text x="0" y="0" font-size="5.6" fill="#555" style="">TWebImageControl</text></svg>
<svg style="left:576.6px;top:303.94px;" width="6.4" height="6" viewBox="0 0 6.4 6"><rect x="0.4" y="0.8" width="5.8" height="4.6" fill="#3f8f3a" /><rect x="0.4" y="0.8" width="5.8" height="2.4" fill="#4aa0dc" /><circle cx="2" cy="2.2" r="0.8" fill="#f5d33a"/><rect x="0" y="0" width="1.6" height="1.4" fill="#1f9aa0" /></svg>
<div style="left:573.9px;top:326.75px;width:96.8px;height:0.5px;background:#e9e9e9;"></div>
<svg class="t" style="left:586.4px;top:322.37px;" width="1" height="1"><text x="0" y="0" font-size="5.6" fill="#555" style="">TWebLinkLabel</text></svg>
<svg style="left:576.6px;top:316.97px;" width="6.4" height="6" viewBox="0 0 6.4 6"><rect x="1" y="3.6" width="5" height="1.6" fill="#3f6fb8" /><rect x="2.4" y="2" width="3" height="1.4" fill="#9fc0e8" /><rect x="1.6" y="5.2" width="4" height="0.5" fill="#2a4a8a" /><rect x="0" y="0" width="2.4" height="2.2" fill="#1f9aa0"/></svg>
<div style="left:573.9px;top:339.78px;width:96.8px;height:0.5px;background:#e9e9e9;"></div>
<svg class="t" style="left:586.4px;top:335.40px;" width="1" height="1"><text x="0" y="0" font-size="5.6" fill="#555" style="">TWebRichEdit</text></svg>
<svg style="left:576.6px;top:330.0px;" width="6.4" height="6" viewBox="0 0 6.4 6"><rect x="1" y="0.8" width="4.6" height="4.8" fill="#f4efe4" stroke="#a89f8f" stroke-width="0.5"/><rect x="2" y="2.4" width="2.6" height="0.6" fill="#c08a4a" /><rect x="2" y="3.6" width="2.6" height="0.6" fill="#6a8fb8" /><rect x="2.6" y="1.4" width="1.4" height="3.6" fill="#d9c7a0" opacity="0.6"/><rect x="0" y="0" width="2.4" height="2.2" fill="#1f9aa0"/></svg>
<div style="left:573.9px;top:352.80999999999995px;width:96.8px;height:0.5px;background:#e9e9e9;"></div>
<svg class="t" style="left:586.4px;top:348.43px;" width="1" height="1"><text x="0" y="0" font-size="5.6" fill="#555" style="">TWebTabSet</text></svg>
<svg style="left:576.6px;top:343.03000000000003px;" width="6.4" height="6" viewBox="0 0 6.4 6"><rect x="0.5" y="1.8" width="5.6" height="3.8" fill="#fbf0d8" stroke="#a89368" stroke-width="0.5"/><rect x="0.5" y="0.8" width="5.6" height="1.2" fill="#6f6250" /><rect x="0" y="0" width="2" height="1.6" fill="#1f9aa0" /></svg>
<div style="left:573.9px;top:365.84000000000003px;width:96.8px;height:0.5px;background:#e9e9e9;"></div>
<svg class="t" style="left:586.4px;top:361.46px;" width="1" height="1"><text x="0" y="0" font-size="5.6" fill="#555" style="">TWebPageControl</text></svg>
<svg style="left:576.6px;top:356.06px;" width="6.4" height="6" viewBox="0 0 6.4 6"><path d="M0.8 1.8 L0.8 5.4 L5.8 5.4" fill="none" stroke="#aaa" stroke-width="0.5"/><rect x="2.4" y="0.8" width="3.4" height="0.6" fill="#bbb" /><rect x="0" y="0" width="2.4" height="2.2" fill="#1f9aa0"/></svg>
<div style="left:573.9px;top:366.09px;width:96.8px;height:5.51px;overflow:hidden;">
<svg class="t" style="left:12.5px;top:8.40px;" width="1" height="1"><text x="0" y="0" font-size="5.6" fill="#555" style="">TWebTabSheet</text></svg>
<svg style="left:2.7px;top:3.0px;" width="6.4" height="6" viewBox="0 0 6.4 6"><rect x="2.2" y="0.6" width="3.6" height="2" fill="#3f5fa8" /><rect x="0.8" y="2.6" width="5" height="3" fill="#dfe6f0" /><rect x="0" y="0" width="2.4" height="2.2" fill="#1f9aa0"/></svg>
</div>
<div style="left:670.7px;top:53.5px;width:7px;height:318.4px;background:#fafafa;border-left:0.5px solid #e6e6e6;"></div>
<div style="left:671.3px;top:59.8px;width:5.4px;height:70.6px;background:#fafafa;border:0.6px solid #bdbdbd;border-radius:1.4px;"></div>
<svg style="left:672.3px;top:55.3px;" width="3.4" height="2.6" viewBox="0 0 3.4 2.6"><path d="M0.3 2.1 L1.7 0.4 L3.1 2.1" fill="none" stroke="#222" stroke-width="1"/></svg>
<svg style="left:672.4px;top:366.6px;" width="3.4" height="2.6" viewBox="0 0 3.4 2.6"><path d="M0.3 0.4 L1.7 2.1 L3.1 0.4" fill="none" stroke="#222" stroke-width="1"/></svg>
<div style="left:678.2px;top:0px;width:0.7px;height:457px;background:#d8d8d8;"></div>
<div style="left:679px;top:0px;width:11px;height:457px;background:#fff;"></div>
<div style="left:686.6px;top:-2px;width:4px;height:5px;background:#fff;border:0.6px solid #666;"></div>
<div style="left:686px;top:5px;width:5px;height:0.5px;background:#999;"></div>
<div style="left:70.7px;top:372.4px;width:607.5px;height:84.6px;background:#fff;"></div>
<div style="left:70.7px;top:372.2px;width:607.5px;height:0.6px;background:#e3e3e3;"></div>
<svg class="t" style="left:78.9px;top:381.70px;" width="1" height="1"><text x="0" y="0" font-size="3.85" fill="#707070" style="">PROBLEMS</text></svg>
<svg class="t" style="left:109.9px;top:381.70px;" width="1" height="1"><text x="0" y="0" font-size="3.85" fill="#707070" style="">OUTPUT</text></svg>
<svg class="t" style="left:136px;top:381.70px;" width="1" height="1"><text x="0" y="0" font-size="3.85" fill="#707070" style="">DEBUG CONSOLE</text></svg>
<svg class="t" style="left:180px;top:381.70px;" width="1" height="1"><text x="0" y="0" font-size="3.85" fill="#2a2a2a" style="">TERMINAL</text></svg>
<svg class="t" style="left:209.7px;top:381.70px;" width="1" height="1"><text x="0" y="0" font-size="3.85" fill="#707070" style="">PORTS</text></svg>
<svg class="t" style="left:232px;top:381.70px;" width="1" height="1"><text x="0" y="0" font-size="3.85" fill="#707070" style="">POLYGLOT NOTEBOOK</text></svg>
<div style="left:179.8px;top:383.1px;width:20.6px;height:0.6px;background:#444;"></div>
<svg class="t" style="left:79px;top:391.70px;" width="1" height="1"><text x="0" y="0" font-size="5.3" fill="#222" style="font-family:&quot;Liberation Mono&quot;,monospace;stroke:#222;stroke-width:0.08px;">Compiling "c:\Users\USER001\.vscode\extensions\tmssoftware.tmswebcore-2.7.2184\resources\coresource\WEBLib.WebTools.pas" ... _</text></svg>
<svg class="t" style="left:79px;top:398.03px;" width="1" height="1"><text x="0" y="0" font-size="5.3" fill="#222" style="font-family:&quot;Liberation Mono&quot;,monospace;stroke:#222;stroke-width:0.08px;">Compiling "c:\Users\USER001\.vscode\extensions\tmssoftware.tmswebcore-2.7.2184\resources\coresource\WEBLib.Dialogs.pas" ...</text></svg>
<svg class="t" style="left:79px;top:404.37px;" width="1" height="1"><text x="0" y="0" font-size="5.3" fill="#222" style="font-family:&quot;Liberation Mono&quot;,monospace;stroke:#222;stroke-width:0.08px;">Compiling "c:\Users\USER001\.vscode\extensions\tmssoftware.tmswebcore-2.7.2184\resources\coresource\WEBLib.Consts.pas" ...</text></svg>
<svg class="t" style="left:79px;top:410.70px;" width="1" height="1"><text x="0" y="0" font-size="5.3" fill="#222" style="font-family:&quot;Liberation Mono&quot;,monospace;stroke:#222;stroke-width:0.08px;">Compiling "c:\Users\USER001\.vscode\extensions\tmssoftware.tmswebcore-2.7.2184\resources\coresource\RTL\math.pas" ...</text></svg>
<svg class="t" style="left:79px;top:417.04px;" width="1" height="1"><text x="0" y="0" font-size="5.3" fill="#222" style="font-family:&quot;Liberation Mono&quot;,monospace;stroke:#222;stroke-width:0.08px;">Compiling "c:\Users\USER001\.vscode\extensions\tmssoftware.tmswebcore-2.7.2184\resources\coresource\WEBLib.Utils.pas" ...</text></svg>
<svg class="t" style="left:79px;top:423.38px;" width="1" height="1"><text x="0" y="0" font-size="5.3" fill="#222" style="font-family:&quot;Liberation Mono&quot;,monospace;stroke:#222;stroke-width:0.08px;">Compiling "c:\Users\USER001\.vscode\extensions\tmssoftware.tmswebcore-2.7.2184\resources\coresource\RTL\rtti.pas" ...</text></svg>
<svg class="t" style="left:79px;top:429.71px;" width="1" height="1"><text x="0" y="0" font-size="5.3" fill="#222" style="font-family:&quot;Liberation Mono&quot;,monospace;stroke:#222;stroke-width:0.08px;">Compiling "c:\Users\USER001\.vscode\extensions\tmssoftware.tmswebcore-2.7.2184\resources\coresource\WEBLib.REST.pas" ...</text></svg>
<svg class="t" style="left:79px;top:436.04px;" width="1" height="1"><text x="0" y="0" font-size="5.3" fill="#222" style="font-family:&quot;Liberation Mono&quot;,monospace;stroke:#222;stroke-width:0.08px;">Compiling "c:\Users\USER001\.vscode\extensions\tmssoftware.tmswebcore-2.7.2184\resources\coresource\WEBLib.JSON.pas" ...</text></svg>
<svg class="t" style="left:79px;top:442.38px;" width="1" height="1"><text x="0" y="0" font-size="5.3" fill="#222" style="font-family:&quot;Liberation Mono&quot;,monospace;stroke:#222;stroke-width:0.08px;">Compiling "c:\Users\USER001\.vscode\extensions\tmssoftware.tmswebcore-2.7.2184\resources\coresource\WEBLib.Storage.pas" ...</text></svg>
<svg class="t" style="left:79px;top:448.71px;" width="1" height="1"><text x="0" y="0" font-size="5.3" fill="#222" style="font-family:&quot;Liberation Mono&quot;,monospace;stroke:#222;stroke-width:0.08px;">Compiling "c:\Users\USER001\.vscode\extensions\tmssoftware.tmswebcore-2.7.2184\resources\coresource\RTL\contnrs.pas" ...</text></svg>
<svg class="t" style="left:79px;top:455.05px;" width="1" height="1"><text x="0" y="0" font-size="5.3" fill="#222" style="font-family:&quot;Liberation Mono&quot;,monospace;stroke:#222;stroke-width:0.08px;">Compiling "c:\Users\USER001\.vscode\extensions\tmssoftware.tmswebcore-2.7.2184\resources\coresource\WEBLib.Modules.pas" ...</text></svg>
<svg style="left:572.6px;top:377.4px;" width="5" height="5" viewBox="0 0 5 5"><rect x="0.3" y="0.3" width="4.4" height="4.4" rx="0.6" fill="none" stroke="#444" stroke-width="0.5"/><path d="M1.2 1.6 L2.2 2.5 L1.2 3.4" fill="none" stroke="#444" stroke-width="0.5"/></svg>
<svg class="t" style="left:579.4px;top:381.49px;" width="1" height="1"><text x="0" y="0" font-size="4.6" fill="#222" style="">Active</text></svg>
<svg style="left:594.4px;top:378px;" width="5" height="4" viewBox="0 0 5 4"><path d="M0.4 2.2 L1.8 3.5 L4.6 0.5" fill="none" stroke="#333" stroke-width="0.6"/></svg>
<svg style="left:604.2px;top:377.4px;" width="5" height="5" viewBox="0 0 5 5"><path d="M2.5 0.2 L2.5 4.8 M0.2 2.5 L4.8 2.5" stroke="#444" stroke-width="0.5"/></svg>
<svg style="left:611.6px;top:379px;" width="3" height="2.4" viewBox="0 0 3 2.4"><path d="M0.3 0.3 L1.5 1.6 L2.7 0.3" fill="none" stroke="#444" stroke-width="0.5"/></svg>
<svg style="left:620px;top:377.4px;" width="5" height="5" viewBox="0 0 5 5"><rect x="0.3" y="0.3" width="4.4" height="4.4" rx="0.6" fill="none" stroke="#444" stroke-width="0.5"/><path d="M2.5 0.3 L2.5 4.7" stroke="#444" stroke-width="0.5"/></svg>
<svg style="left:630.6px;top:377.2px;" width="5" height="5.4" viewBox="0 0 5 5.4"><path d="M0.4 1.2 L4.6 1.2 M1.8 0.4 L3.2 0.4 M1 1.2 L1.2 5 L3.8 5 L4 1.2 M2 2.2 L2 4.2 M3 2.2 L3 4.2" fill="none" stroke="#444" stroke-width="0.5"/></svg>
<div style="left:640.6px;top:379.6px;width:4.6px;height:0.6px;background:#aaa;"></div>
<div style="left:651.3px;top:377px;width:0.5px;height:6px;background:#bbb;"></div>
<svg style="left:656.4px;top:377.4px;" width="5" height="5" viewBox="0 0 5 5"><path d="M0.3 1.6 L0.3 0.3 L1.6 0.3 M3.4 0.3 L4.7 0.3 L4.7 1.6 M4.7 3.4 L4.7 4.7 L3.4 4.7 M1.6 4.7 L0.3 4.7 L0.3 3.4" fill="none" stroke="#444" stroke-width="0.5"/></svg>
<svg style="left:667.4px;top:377.8px;" width="4.2" height="4.2" viewBox="0 0 4.2 4.2"><path d="M0.3 0.3 L3.9 3.9 M3.9 0.3 L0.3 3.9" stroke="#444" stroke-width="0.55"/></svg>
<div style="left:672.8px;top:392.6px;width:1.4px;height:1.6px;background:#2a7fd0;"></div>
<div style="left:70.7px;top:393px;width:602px;height:0.5px;background:#f0f0f0;"></div>
</div></div></body></html>
